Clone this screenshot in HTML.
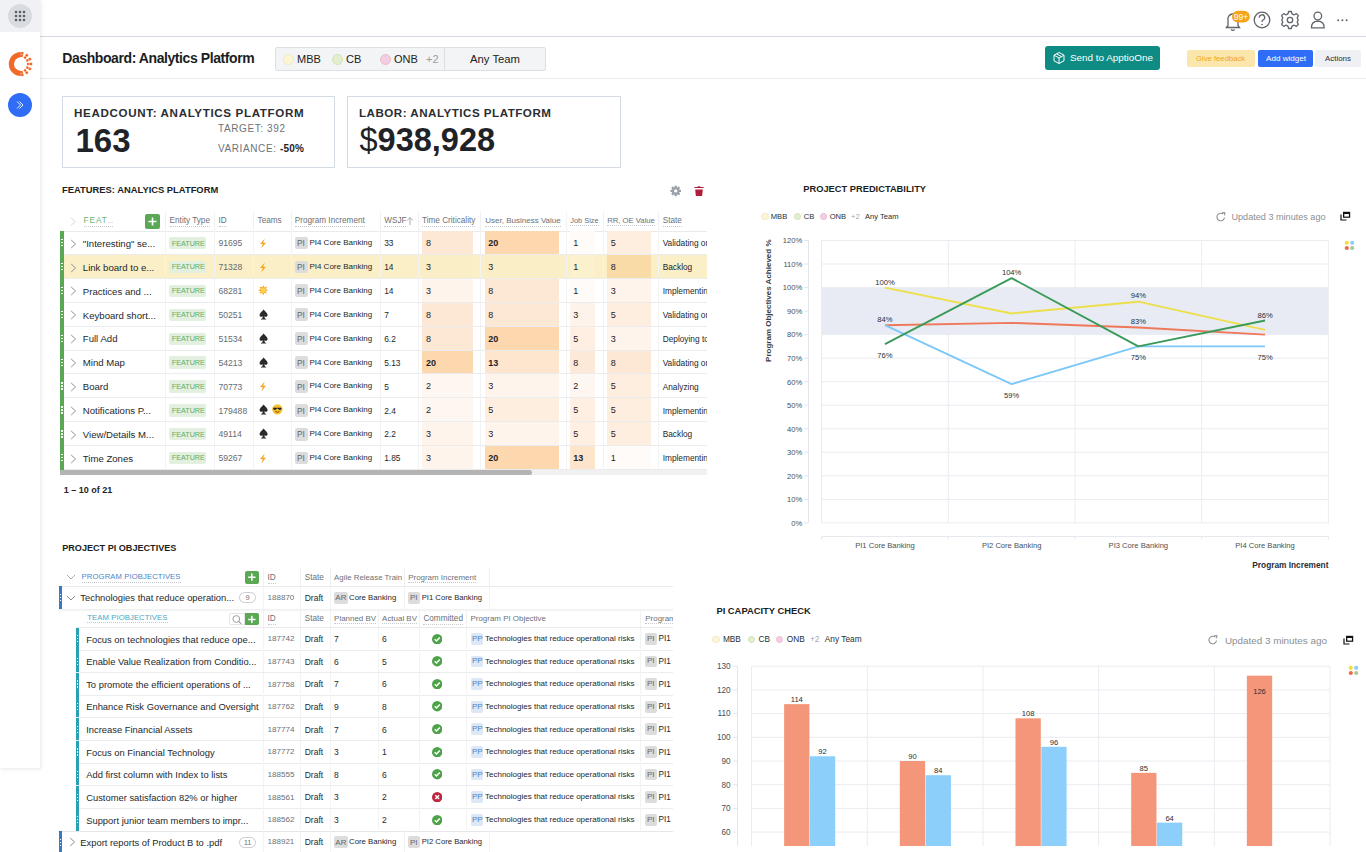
<!DOCTYPE html>
<html><head><meta charset="utf-8"><style>
*{box-sizing:border-box;margin:0;padding:0}
html,body{width:1366px;height:852px;overflow:hidden;background:#fff;font-family:"Liberation Sans",sans-serif;color:#222}
.a{position:absolute}
.t{position:absolute;white-space:nowrap;line-height:1}
</style></head>
<body>
<div class="a" style="left:40px;top:36px;width:1326px;height:1px;background:#d3dae3"></div>
<div class="a" style="left:40px;top:78px;width:1326px;height:1px;background:#e8ebef"></div>
<svg class="a" style="left:1220px;top:5px" width="146" height="30" viewBox="0 0 146 30">
<path d="M6.5 22.5 L8 20.5 L8 15 A5 5 0 0 1 18 13 L18 20.5 L19.5 22.5 Z" stroke="#5f656c" stroke-width="1.3" fill="none"/>
<path d="M11 24.5 Q12.8 26.3 14.6 24.5" stroke="#5f656c" stroke-width="1.3" fill="none"/>
<rect x="12" y="5.8" width="17.8" height="11.8" rx="5.9" fill="#f5a31a"/>
<text x="20.9" y="14.8" font-family="Liberation Sans" font-size="8.5" fill="#fff" text-anchor="middle">99+</text>
<circle cx="42" cy="15" r="7.8" stroke="#5f656c" stroke-width="1.3" fill="none"/>
<path d="M39.3 12.6 A2.7 2.7 0 1 1 43 15 Q42 15.6 42 17" stroke="#5f656c" stroke-width="1.3" fill="none"/>
<circle cx="42" cy="19.6" r="0.8" fill="#5f656c"/>
<circle cx="70" cy="15" r="2.7" stroke="#5f656c" stroke-width="1.3" fill="none"/>
<path d="M68.6 6.5 L71.4 6.5 L72 8.8 L74.2 9.8 L76.4 8.6 L78.4 10.6 L77.2 12.8 L78.2 15 L78.2 15 L77.2 17.2 L78.4 19.4 L76.4 21.4 L74.2 20.2 L72 21.2 L71.4 23.5 L68.6 23.5 L68 21.2 L65.8 20.2 L63.6 21.4 L61.6 19.4 L62.8 17.2 L61.8 15 L62.8 12.8 L61.6 10.6 L63.6 8.6 L65.8 9.8 L68 8.8 Z" stroke="#5f656c" stroke-width="1.3" fill="none" stroke-linejoin="round"/>
<circle cx="97.8" cy="11" r="3.8" stroke="#5f656c" stroke-width="1.3" fill="none"/>
<path d="M91.5 22.8 Q91.2 16.6 97.8 16.2 Q104.4 16.6 104.1 22.8 Z" stroke="#5f656c" stroke-width="1.3" fill="none"/>
<circle cx="118.2" cy="15.3" r="1" fill="#5f656c"/><circle cx="122.4" cy="15.3" r="1" fill="#5f656c"/><circle cx="126.6" cy="15.3" r="1" fill="#5f656c"/>
</svg>
<div class="t" style="left:62.3px;top:50.6px;font-size:14px;font-weight:bold;color:#1b1e21;letter-spacing:-0.42px">Dashboard: Analytics Platform</div>
<div class="a" style="left:275px;top:47px;width:271px;height:24px;background:#f3f4f5;border:1px solid #dde0e3;border-radius:2px"></div>
<div class="a" style="left:444px;top:48px;width:1px;height:22px;background:#dde0e3"></div>
<div class="a" style="left:282.5px;top:53.5px;width:11px;height:11px;border-radius:50%;background:#fcf6d6;border:1px solid #efe9c2"></div>
<div class="a" style="left:331.5px;top:53.5px;width:11px;height:11px;border-radius:50%;background:#e3eecf;border:1px solid #d3e0bd"></div>
<div class="a" style="left:379.5px;top:53.5px;width:11px;height:11px;border-radius:50%;background:#f4cee0;border:1px solid #e8bcd0"></div>
<div class="t" style="left:297px;font-size:11px;color:#222;top:54px">MBB</div>
<div class="t" style="left:346px;font-size:11px;color:#222;top:54px">CB</div>
<div class="t" style="left:394px;font-size:11px;color:#222;top:54px">ONB</div>
<div class="t" style="left:426px;font-size:11px;color:#9a9fa4;top:54px">+2</div>
<div class="t" style="left:470px;font-size:11px;color:#222;top:54px;font-size:11.3px">Any Team</div>
<div class="a" style="left:1045px;top:46px;width:115px;height:24px;background:#0e8c84;border-radius:3px"></div>
<svg class="a" style="left:1052px;top:51px" width="14" height="14" viewBox="0 0 14 14"><path d="M7 1.5 L12 4.2 L12 9.8 L7 12.5 L2 9.8 L2 4.2 Z M2 4.2 L7 7 L12 4.2 M7 7 L7 12.5 M4.5 2.9 L9.5 5.6" stroke="#fff" stroke-width="1" fill="none"/></svg>
<div class="t" style="left:1070px;top:53px;font-size:9.9px;color:#fff">Send to ApptioOne</div>
<div class="a" style="left:1187px;top:50px;width:68px;height:17px;background:#fbe7ac;border-radius:2px"></div>
<div class="t" style="left:1196px;top:54.5px;font-size:7.7px;color:#f3a521">Give feedback</div>
<div class="a" style="left:1258px;top:50px;width:55px;height:17px;background:#2f6df6;border-radius:2px"></div>
<div class="t" style="left:1266px;top:54.5px;font-size:8.1px;color:#fff">Add widget</div>
<div class="a" style="left:1315px;top:50px;width:46px;height:17px;background:#eef0f3;border-radius:2px"></div>
<div class="t" style="left:1325px;top:54.5px;font-size:7.9px;color:#2a2e33">Actions</div>
<div class="a" style="left:62px;top:96px;width:273px;height:72px;border:1px solid #d5dbe3"></div>
<div class="a" style="left:347px;top:96px;width:274px;height:72px;border:1px solid #d5dbe3"></div>
<div class="t" style="left:74px;top:107px;font-size:11.6px;font-weight:bold;letter-spacing:0.65px;color:#2a2e33">HEADCOUNT: ANALYTICS PLATFORM</div>
<div class="t" style="left:75.5px;top:123.5px;font-size:33px;font-weight:bold;color:#1f2327">163</div>
<div class="t" style="left:218px;top:124px;font-size:10px;letter-spacing:0.6px;color:#6d7378">TARGET: 392</div>
<div class="t" style="left:218px;top:143.5px;font-size:10px;letter-spacing:0.6px;color:#6d7378">VARIANCE: <b style="color:#1f2327;letter-spacing:0.2px">-50%</b></div>
<div class="t" style="left:359px;top:107px;font-size:11.6px;font-weight:bold;letter-spacing:0.5px;color:#2a2e33">LABOR: ANALYTICS PLATFORM</div>
<div class="t" style="left:359.5px;top:123.5px;font-size:32.5px;font-weight:bold;color:#1f2327"><span style="font-weight:normal">$</span>938,928</div>
<div class="t" style="left:62px;top:184.5px;font-size:9.4px;font-weight:bold;color:#1b1e21">FEATURES: ANALYICS PLATFORM</div>
<svg class="a" style="left:668px;top:184px" width="15" height="15" viewBox="0 0 15 15">
<rect x="6.6" y="1.6" width="2.2" height="3" transform="rotate(0 7.7 6.9)" fill="#9ba0a6"/><rect x="6.6" y="1.6" width="2.2" height="3" transform="rotate(45 7.7 6.9)" fill="#9ba0a6"/><rect x="6.6" y="1.6" width="2.2" height="3" transform="rotate(90 7.7 6.9)" fill="#9ba0a6"/><rect x="6.6" y="1.6" width="2.2" height="3" transform="rotate(135 7.7 6.9)" fill="#9ba0a6"/><rect x="6.6" y="1.6" width="2.2" height="3" transform="rotate(180 7.7 6.9)" fill="#9ba0a6"/><rect x="6.6" y="1.6" width="2.2" height="3" transform="rotate(225 7.7 6.9)" fill="#9ba0a6"/><rect x="6.6" y="1.6" width="2.2" height="3" transform="rotate(270 7.7 6.9)" fill="#9ba0a6"/><rect x="6.6" y="1.6" width="2.2" height="3" transform="rotate(315 7.7 6.9)" fill="#9ba0a6"/><circle cx="7.7" cy="6.9" r="2.7" stroke="#9ba0a6" stroke-width="2.1" fill="none"/></svg>
<svg class="a" style="left:693px;top:184px" width="12" height="13" viewBox="0 0 12 13">
<path d="M1.4 3.9 L10.6 3.9 L10.6 3.1 L7.5 3.1 L7 2.2 L5 2.2 L4.5 3.1 L1.4 3.1 Z" fill="#b01e3c"/>
<path d="M2.2 5.5 L9.8 5.5 L9.2 11.4 Q9.1 12 8.5 12 L3.5 12 Q2.9 12 2.8 11.4 Z" fill="#b01e3c"/></svg>
<div class="a" style="left:60px;top:211.5px;width:647px;height:258.5px;overflow:hidden">
<div class="a" style="left:0.00px;top:19.50px;width:647.00px;height:1.00px;background:#e9eaeb"></div>
<div class="a" style="left:105.00px;top:0.00px;width:1.00px;height:19.70px;background:#f0f1f2"></div>
<div class="a" style="left:154.00px;top:0.00px;width:1.00px;height:19.70px;background:#f0f1f2"></div>
<div class="a" style="left:193.00px;top:0.00px;width:1.00px;height:19.70px;background:#f0f1f2"></div>
<div class="a" style="left:231.00px;top:0.00px;width:1.00px;height:19.70px;background:#f0f1f2"></div>
<div class="a" style="left:320.00px;top:0.00px;width:1.00px;height:19.70px;background:#f0f1f2"></div>
<div class="a" style="left:358.00px;top:0.00px;width:1.00px;height:19.70px;background:#f0f1f2"></div>
<div class="a" style="left:420.00px;top:0.00px;width:1.00px;height:19.70px;background:#f0f1f2"></div>
<div class="a" style="left:506.00px;top:0.00px;width:1.00px;height:19.70px;background:#f0f1f2"></div>
<div class="a" style="left:543.00px;top:0.00px;width:1.00px;height:19.70px;background:#f0f1f2"></div>
<div class="a" style="left:598.00px;top:0.00px;width:1.00px;height:19.70px;background:#f0f1f2"></div>
<svg class="a" style="left:9.00px;top:4.50px;width:8.00px;height:11.00px;" viewBox="0 0 8 11"><path d="M2 1.5 L6 5.5 L2 9.5" stroke="#d3d5d8" stroke-width="1" fill="none"/></svg>
<div class="t" style="left:23.50px;top:5.00px;font-size:8.2px;color:#6db56b;border-bottom:1px dotted #c6cacf;padding-bottom:1px;letter-spacing:1.0px">FEAT<span style="letter-spacing:0.2px;color:#8a8f94;font-size:6px">...</span></div>
<div class="a" style="left:85.00px;top:2.50px;width:15.00px;height:15.00px;background:#5aa853;border-radius:2px"></div>
<svg class="a" style="left:85.00px;top:2.50px;width:15.00px;height:15.00px;" viewBox="0 0 15 15"><path d="M7.5 3.5 L7.5 11.5 M3.5 7.5 L11.5 7.5" stroke="#fff" stroke-width="1.6"/></svg>
<div class="t" style="left:109.60px;top:5.00px;font-size:8.2px;color:#6c7177;border-bottom:1px dotted #c6cacf;padding-bottom:1px;">Entity Type</div>
<div class="t" style="left:158.50px;top:5.00px;font-size:8.2px;color:#6c7177;border-bottom:1px dotted #c6cacf;padding-bottom:1px;">ID</div>
<div class="t" style="left:197.60px;top:5.00px;font-size:8.2px;color:#6c7177;">Teams</div>
<div class="t" style="left:234.70px;top:5.00px;font-size:8.2px;color:#6c7177;border-bottom:1px dotted #c6cacf;padding-bottom:1px;">Program Increment</div>
<div class="t" style="left:324.20px;top:5.00px;font-size:8.2px;color:#6c7177;border-bottom:1px dotted #c6cacf;padding-bottom:1px;">WSJF</div>
<svg class="a" style="left:346.00px;top:4.50px;width:8.00px;height:10.00px;" viewBox="0 0 8 10"><path d="M4 9 L4 1.5 M1.2 4.3 L4 1.5 L6.8 4.3" stroke="#a8acb0" stroke-width="1" fill="none"/></svg>
<div class="t" style="left:362.00px;top:5.00px;font-size:8.2px;color:#6c7177;border-bottom:1px dotted #c6cacf;padding-bottom:1px;">Time Criticality</div>
<div class="t" style="left:425.30px;top:5.00px;font-size:8.0px;color:#6c7177;border-bottom:1px dotted #c6cacf;padding-bottom:1px;">User, Business Value</div>
<div class="t" style="left:510.30px;top:5.00px;font-size:7.4px;color:#6c7177;border-bottom:1px dotted #c6cacf;padding-bottom:1px;">Job Size</div>
<div class="t" style="left:547.20px;top:5.00px;font-size:7.7px;color:#6c7177;border-bottom:1px dotted #c6cacf;padding-bottom:1px;">RR, OE Value</div>
<div class="t" style="left:602.70px;top:5.00px;font-size:8.2px;color:#6c7177;border-bottom:1px dotted #c6cacf;padding-bottom:1px;">State</div>
<div class="a" style="left:0.00px;top:42.58px;width:647.00px;height:1.00px;background:#ebeced"></div>
<div class="a" style="left:105.00px;top:19.70px;width:1.00px;height:22.88px;background:#f3f3f4"></div>
<div class="a" style="left:154.00px;top:19.70px;width:1.00px;height:22.88px;background:#f3f3f4"></div>
<div class="a" style="left:193.00px;top:19.70px;width:1.00px;height:22.88px;background:#f3f3f4"></div>
<div class="a" style="left:231.00px;top:19.70px;width:1.00px;height:22.88px;background:#f3f3f4"></div>
<div class="a" style="left:320.00px;top:19.70px;width:1.00px;height:22.88px;background:#f3f3f4"></div>
<div class="a" style="left:358.00px;top:19.70px;width:1.00px;height:22.88px;background:#f3f3f4"></div>
<div class="a" style="left:420.00px;top:19.70px;width:1.00px;height:22.88px;background:#f3f3f4"></div>
<div class="a" style="left:506.00px;top:19.70px;width:1.00px;height:22.88px;background:#f3f3f4"></div>
<div class="a" style="left:543.00px;top:19.70px;width:1.00px;height:22.88px;background:#f3f3f4"></div>
<div class="a" style="left:598.00px;top:19.70px;width:1.00px;height:22.88px;background:#f3f3f4"></div>
<div class="a" style="left:362.00px;top:19.70px;width:51.20px;height:22.88px;background:#fde7d5"></div>
<div class="a" style="left:425.30px;top:19.70px;width:73.60px;height:22.88px;background:#fdd8ae"></div>
<div class="a" style="left:509.80px;top:19.70px;width:25.20px;height:22.88px;background:#fffbf8"></div>
<div class="a" style="left:547.20px;top:19.70px;width:43.80px;height:22.88px;background:#feeee0"></div>
<div class="a" style="left:0.00px;top:19.70px;width:4.00px;height:23.88px;background:#5aa853"></div>
<div class="a" style="left:1.30px;top:27.70px;width:1.30px;height:1.30px;background:#fff"></div>
<div class="a" style="left:1.30px;top:30.70px;width:1.30px;height:1.30px;background:#fff"></div>
<div class="a" style="left:1.30px;top:33.70px;width:1.30px;height:1.30px;background:#fff"></div>
<svg class="a" style="left:10.00px;top:27.20px;width:7.00px;height:10.00px;" viewBox="0 0 7 10"><path d="M1.2 1 L5.5 5 L1.2 9" stroke="#8d9196" stroke-width="1" fill="none"/></svg>
<div class="t" style="left:22.80px;top:27.40px;font-size:9.6px;color:#24282c">"Interesting" se...</div>
<div class="a" style="left:109.20px;top:25.50px;width:37.30px;height:12.40px;background:#e3f0df;border-radius:2px"></div>
<div class="t" style="left:111.80px;top:28.00px;font-size:7.2px;color:#62ad5f">FEATURE</div>
<div class="t" style="left:158.50px;top:27.90px;font-size:8.6px;color:#666b70">91695</div>
<svg class="a" style="left:198.50px;top:26.20px;width:8.00px;height:11.00px;" viewBox="0 0 8 11"><path d="M5.8 0.5 L1 6 L3.8 6 L2.2 10.5 L7 4.8 L4.2 4.8 Z" fill="#f5a623"/></svg>
<div class="a" style="left:235.00px;top:25.20px;width:12.50px;height:12.80px;background:#dcdcdc;border-radius:2px"></div>
<div class="t" style="left:237.00px;top:27.90px;font-size:8.3px;color:#666">PI</div>
<div class="t" style="left:249.40px;top:27.70px;font-size:8px;color:#24282c">PI4 Core Banking</div>
<div class="t" style="left:324.20px;top:27.90px;font-size:8.4px;color:#24282c">33</div>
<div class="t" style="left:366.00px;top:27.70px;font-size:9px;color:#1f2327;">8</div>
<div class="t" style="left:428.30px;top:27.70px;font-size:9px;color:#1f2327;font-weight:bold;">20</div>
<div class="t" style="left:513.20px;top:27.70px;font-size:9px;color:#1f2327;">1</div>
<div class="t" style="left:550.80px;top:27.70px;font-size:9px;color:#1f2327;">5</div>
<div class="t" style="left:602.70px;top:27.90px;font-size:8.3px;color:#24282c">Validating on Staging</div>
<div class="a" style="left:0.00px;top:43.58px;width:647.00px;height:23.88px;background:#faefc6"></div>
<div class="a" style="left:0.00px;top:66.46px;width:647.00px;height:1.00px;background:#ebeced"></div>
<div class="a" style="left:105.00px;top:43.58px;width:1.00px;height:22.88px;background:#f3f3f4"></div>
<div class="a" style="left:154.00px;top:43.58px;width:1.00px;height:22.88px;background:#f3f3f4"></div>
<div class="a" style="left:193.00px;top:43.58px;width:1.00px;height:22.88px;background:#f3f3f4"></div>
<div class="a" style="left:231.00px;top:43.58px;width:1.00px;height:22.88px;background:#f3f3f4"></div>
<div class="a" style="left:320.00px;top:43.58px;width:1.00px;height:22.88px;background:#f3f3f4"></div>
<div class="a" style="left:358.00px;top:43.58px;width:1.00px;height:22.88px;background:#f3f3f4"></div>
<div class="a" style="left:420.00px;top:43.58px;width:1.00px;height:22.88px;background:#f3f3f4"></div>
<div class="a" style="left:506.00px;top:43.58px;width:1.00px;height:22.88px;background:#f3f3f4"></div>
<div class="a" style="left:543.00px;top:43.58px;width:1.00px;height:22.88px;background:#f3f3f4"></div>
<div class="a" style="left:598.00px;top:43.58px;width:1.00px;height:22.88px;background:#f3f3f4"></div>
<div class="a" style="left:362.00px;top:43.58px;width:51.20px;height:22.88px;background:#f9eec5"></div>
<div class="a" style="left:425.30px;top:43.58px;width:73.60px;height:22.88px;background:#f9eec5"></div>
<div class="a" style="left:509.80px;top:43.58px;width:25.20px;height:22.88px;background:#fbf1cc"></div>
<div class="a" style="left:547.20px;top:43.58px;width:43.80px;height:22.88px;background:#f8dba6"></div>
<div class="a" style="left:0.00px;top:43.58px;width:4.00px;height:23.88px;background:#5aa853"></div>
<div class="a" style="left:1.30px;top:51.58px;width:1.30px;height:1.30px;background:#fff"></div>
<div class="a" style="left:1.30px;top:54.58px;width:1.30px;height:1.30px;background:#fff"></div>
<div class="a" style="left:1.30px;top:57.58px;width:1.30px;height:1.30px;background:#fff"></div>
<svg class="a" style="left:10.00px;top:51.08px;width:7.00px;height:10.00px;" viewBox="0 0 7 10"><path d="M1.2 1 L5.5 5 L1.2 9" stroke="#8d9196" stroke-width="1" fill="none"/></svg>
<div class="t" style="left:22.80px;top:51.28px;font-size:9.6px;color:#24282c">Link board to e...</div>
<div class="a" style="left:109.20px;top:49.38px;width:37.30px;height:12.40px;background:#e3f0df;border-radius:2px"></div>
<div class="t" style="left:111.80px;top:51.88px;font-size:7.2px;color:#62ad5f">FEATURE</div>
<div class="t" style="left:158.50px;top:51.78px;font-size:8.6px;color:#666b70">71328</div>
<svg class="a" style="left:198.50px;top:50.08px;width:8.00px;height:11.00px;" viewBox="0 0 8 11"><path d="M5.8 0.5 L1 6 L3.8 6 L2.2 10.5 L7 4.8 L4.2 4.8 Z" fill="#f5a623"/></svg>
<div class="a" style="left:235.00px;top:49.08px;width:12.50px;height:12.80px;background:#dcdcdc;border-radius:2px"></div>
<div class="t" style="left:237.00px;top:51.78px;font-size:8.3px;color:#666">PI</div>
<div class="t" style="left:249.40px;top:51.58px;font-size:8px;color:#24282c">PI4 Core Banking</div>
<div class="t" style="left:324.20px;top:51.78px;font-size:8.4px;color:#24282c">14</div>
<div class="t" style="left:366.00px;top:51.58px;font-size:9px;color:#1f2327;">3</div>
<div class="t" style="left:428.30px;top:51.58px;font-size:9px;color:#1f2327;">3</div>
<div class="t" style="left:513.20px;top:51.58px;font-size:9px;color:#1f2327;">1</div>
<div class="t" style="left:550.80px;top:51.58px;font-size:9px;color:#1f2327;">8</div>
<div class="t" style="left:602.70px;top:51.78px;font-size:8.3px;color:#24282c">Backlog</div>
<div class="a" style="left:0.00px;top:90.34px;width:647.00px;height:1.00px;background:#ebeced"></div>
<div class="a" style="left:105.00px;top:67.46px;width:1.00px;height:22.88px;background:#f3f3f4"></div>
<div class="a" style="left:154.00px;top:67.46px;width:1.00px;height:22.88px;background:#f3f3f4"></div>
<div class="a" style="left:193.00px;top:67.46px;width:1.00px;height:22.88px;background:#f3f3f4"></div>
<div class="a" style="left:231.00px;top:67.46px;width:1.00px;height:22.88px;background:#f3f3f4"></div>
<div class="a" style="left:320.00px;top:67.46px;width:1.00px;height:22.88px;background:#f3f3f4"></div>
<div class="a" style="left:358.00px;top:67.46px;width:1.00px;height:22.88px;background:#f3f3f4"></div>
<div class="a" style="left:420.00px;top:67.46px;width:1.00px;height:22.88px;background:#f3f3f4"></div>
<div class="a" style="left:506.00px;top:67.46px;width:1.00px;height:22.88px;background:#f3f3f4"></div>
<div class="a" style="left:543.00px;top:67.46px;width:1.00px;height:22.88px;background:#f3f3f4"></div>
<div class="a" style="left:598.00px;top:67.46px;width:1.00px;height:22.88px;background:#f3f3f4"></div>
<div class="a" style="left:362.00px;top:67.46px;width:51.20px;height:22.88px;background:#fef4ec"></div>
<div class="a" style="left:425.30px;top:67.46px;width:73.60px;height:22.88px;background:#fde7d5"></div>
<div class="a" style="left:509.80px;top:67.46px;width:25.20px;height:22.88px;background:#fffbf8"></div>
<div class="a" style="left:547.20px;top:67.46px;width:43.80px;height:22.88px;background:#fef4ec"></div>
<div class="a" style="left:0.00px;top:67.46px;width:4.00px;height:23.88px;background:#5aa853"></div>
<div class="a" style="left:1.30px;top:75.46px;width:1.30px;height:1.30px;background:#fff"></div>
<div class="a" style="left:1.30px;top:78.46px;width:1.30px;height:1.30px;background:#fff"></div>
<div class="a" style="left:1.30px;top:81.46px;width:1.30px;height:1.30px;background:#fff"></div>
<svg class="a" style="left:10.00px;top:74.96px;width:7.00px;height:10.00px;" viewBox="0 0 7 10"><path d="M1.2 1 L5.5 5 L1.2 9" stroke="#8d9196" stroke-width="1" fill="none"/></svg>
<div class="t" style="left:22.80px;top:75.16px;font-size:9.6px;color:#24282c">Practices and ...</div>
<div class="a" style="left:109.20px;top:73.26px;width:37.30px;height:12.40px;background:#e3f0df;border-radius:2px"></div>
<div class="t" style="left:111.80px;top:75.76px;font-size:7.2px;color:#62ad5f">FEATURE</div>
<div class="t" style="left:158.50px;top:75.66px;font-size:8.6px;color:#666b70">68281</div>
<svg class="a" style="left:198.00px;top:73.76px;width:10.40px;height:10.40px;" viewBox="0 0 10 10"><path d="M5 0 L6 2.5 L8.5 1.5 L7.5 4 L10 5 L7.5 6 L8.5 8.5 L6 7.5 L5 10 L4 7.5 L1.5 8.5 L2.5 6 L0 5 L2.5 4 L1.5 1.5 L4 2.5 Z" fill="#f6a21e"/><circle cx="5" cy="5" r="2.6" fill="#fbd34a"/></svg>
<div class="a" style="left:235.00px;top:72.96px;width:12.50px;height:12.80px;background:#dcdcdc;border-radius:2px"></div>
<div class="t" style="left:237.00px;top:75.66px;font-size:8.3px;color:#666">PI</div>
<div class="t" style="left:249.40px;top:75.46px;font-size:8px;color:#24282c">PI4 Core Banking</div>
<div class="t" style="left:324.20px;top:75.66px;font-size:8.4px;color:#24282c">14</div>
<div class="t" style="left:366.00px;top:75.46px;font-size:9px;color:#1f2327;">3</div>
<div class="t" style="left:428.30px;top:75.46px;font-size:9px;color:#1f2327;">8</div>
<div class="t" style="left:513.20px;top:75.46px;font-size:9px;color:#1f2327;">1</div>
<div class="t" style="left:550.80px;top:75.46px;font-size:9px;color:#1f2327;">3</div>
<div class="t" style="left:602.70px;top:75.66px;font-size:8.3px;color:#24282c">Implementing</div>
<div class="a" style="left:0.00px;top:114.22px;width:647.00px;height:1.00px;background:#ebeced"></div>
<div class="a" style="left:105.00px;top:91.34px;width:1.00px;height:22.88px;background:#f3f3f4"></div>
<div class="a" style="left:154.00px;top:91.34px;width:1.00px;height:22.88px;background:#f3f3f4"></div>
<div class="a" style="left:193.00px;top:91.34px;width:1.00px;height:22.88px;background:#f3f3f4"></div>
<div class="a" style="left:231.00px;top:91.34px;width:1.00px;height:22.88px;background:#f3f3f4"></div>
<div class="a" style="left:320.00px;top:91.34px;width:1.00px;height:22.88px;background:#f3f3f4"></div>
<div class="a" style="left:358.00px;top:91.34px;width:1.00px;height:22.88px;background:#f3f3f4"></div>
<div class="a" style="left:420.00px;top:91.34px;width:1.00px;height:22.88px;background:#f3f3f4"></div>
<div class="a" style="left:506.00px;top:91.34px;width:1.00px;height:22.88px;background:#f3f3f4"></div>
<div class="a" style="left:543.00px;top:91.34px;width:1.00px;height:22.88px;background:#f3f3f4"></div>
<div class="a" style="left:598.00px;top:91.34px;width:1.00px;height:22.88px;background:#f3f3f4"></div>
<div class="a" style="left:362.00px;top:91.34px;width:51.20px;height:22.88px;background:#fde7d5"></div>
<div class="a" style="left:425.30px;top:91.34px;width:73.60px;height:22.88px;background:#fde7d5"></div>
<div class="a" style="left:509.80px;top:91.34px;width:25.20px;height:22.88px;background:#fef3ea"></div>
<div class="a" style="left:547.20px;top:91.34px;width:43.80px;height:22.88px;background:#feeee0"></div>
<div class="a" style="left:0.00px;top:91.34px;width:4.00px;height:23.88px;background:#5aa853"></div>
<div class="a" style="left:1.30px;top:99.34px;width:1.30px;height:1.30px;background:#fff"></div>
<div class="a" style="left:1.30px;top:102.34px;width:1.30px;height:1.30px;background:#fff"></div>
<div class="a" style="left:1.30px;top:105.34px;width:1.30px;height:1.30px;background:#fff"></div>
<svg class="a" style="left:10.00px;top:98.84px;width:7.00px;height:10.00px;" viewBox="0 0 7 10"><path d="M1.2 1 L5.5 5 L1.2 9" stroke="#8d9196" stroke-width="1" fill="none"/></svg>
<div class="t" style="left:22.80px;top:99.04px;font-size:9.6px;color:#24282c">Keyboard short...</div>
<div class="a" style="left:109.20px;top:97.14px;width:37.30px;height:12.40px;background:#e3f0df;border-radius:2px"></div>
<div class="t" style="left:111.80px;top:99.64px;font-size:7.2px;color:#62ad5f">FEATURE</div>
<div class="t" style="left:158.50px;top:99.54px;font-size:8.6px;color:#666b70">50251</div>
<svg class="a" style="left:198.70px;top:97.34px;width:9.20px;height:11.20px;" viewBox="0 0 9 11"><path d="M4.5 0.5 C3 2.5 0.5 4 0.5 6 C0.5 7.6 2.3 8.3 3.8 7.2 L3.2 9.4 L2 9.6 L2 10.3 L7 10.3 L7 9.6 L5.8 9.4 L5.2 7.2 C6.7 8.3 8.5 7.6 8.5 6 C8.5 4 6 2.5 4.5 0.5 Z" fill="#2b2b2b"/></svg>
<div class="a" style="left:235.00px;top:96.84px;width:12.50px;height:12.80px;background:#dcdcdc;border-radius:2px"></div>
<div class="t" style="left:237.00px;top:99.54px;font-size:8.3px;color:#666">PI</div>
<div class="t" style="left:249.40px;top:99.34px;font-size:8px;color:#24282c">PI4 Core Banking</div>
<div class="t" style="left:324.20px;top:99.54px;font-size:8.4px;color:#24282c">7</div>
<div class="t" style="left:366.00px;top:99.34px;font-size:9px;color:#1f2327;">8</div>
<div class="t" style="left:428.30px;top:99.34px;font-size:9px;color:#1f2327;">8</div>
<div class="t" style="left:513.20px;top:99.34px;font-size:9px;color:#1f2327;">3</div>
<div class="t" style="left:550.80px;top:99.34px;font-size:9px;color:#1f2327;">5</div>
<div class="t" style="left:602.70px;top:99.54px;font-size:8.3px;color:#24282c">Validating on Staging</div>
<div class="a" style="left:0.00px;top:138.10px;width:647.00px;height:1.00px;background:#ebeced"></div>
<div class="a" style="left:105.00px;top:115.22px;width:1.00px;height:22.88px;background:#f3f3f4"></div>
<div class="a" style="left:154.00px;top:115.22px;width:1.00px;height:22.88px;background:#f3f3f4"></div>
<div class="a" style="left:193.00px;top:115.22px;width:1.00px;height:22.88px;background:#f3f3f4"></div>
<div class="a" style="left:231.00px;top:115.22px;width:1.00px;height:22.88px;background:#f3f3f4"></div>
<div class="a" style="left:320.00px;top:115.22px;width:1.00px;height:22.88px;background:#f3f3f4"></div>
<div class="a" style="left:358.00px;top:115.22px;width:1.00px;height:22.88px;background:#f3f3f4"></div>
<div class="a" style="left:420.00px;top:115.22px;width:1.00px;height:22.88px;background:#f3f3f4"></div>
<div class="a" style="left:506.00px;top:115.22px;width:1.00px;height:22.88px;background:#f3f3f4"></div>
<div class="a" style="left:543.00px;top:115.22px;width:1.00px;height:22.88px;background:#f3f3f4"></div>
<div class="a" style="left:598.00px;top:115.22px;width:1.00px;height:22.88px;background:#f3f3f4"></div>
<div class="a" style="left:362.00px;top:115.22px;width:51.20px;height:22.88px;background:#fde7d5"></div>
<div class="a" style="left:425.30px;top:115.22px;width:73.60px;height:22.88px;background:#fdd8ae"></div>
<div class="a" style="left:509.80px;top:115.22px;width:25.20px;height:22.88px;background:#feefe2"></div>
<div class="a" style="left:547.20px;top:115.22px;width:43.80px;height:22.88px;background:#fef4ec"></div>
<div class="a" style="left:0.00px;top:115.22px;width:4.00px;height:23.88px;background:#5aa853"></div>
<div class="a" style="left:1.30px;top:123.22px;width:1.30px;height:1.30px;background:#fff"></div>
<div class="a" style="left:1.30px;top:126.22px;width:1.30px;height:1.30px;background:#fff"></div>
<div class="a" style="left:1.30px;top:129.22px;width:1.30px;height:1.30px;background:#fff"></div>
<svg class="a" style="left:10.00px;top:122.72px;width:7.00px;height:10.00px;" viewBox="0 0 7 10"><path d="M1.2 1 L5.5 5 L1.2 9" stroke="#8d9196" stroke-width="1" fill="none"/></svg>
<div class="t" style="left:22.80px;top:122.92px;font-size:9.6px;color:#24282c">Full Add</div>
<div class="a" style="left:109.20px;top:121.02px;width:37.30px;height:12.40px;background:#e3f0df;border-radius:2px"></div>
<div class="t" style="left:111.80px;top:123.52px;font-size:7.2px;color:#62ad5f">FEATURE</div>
<div class="t" style="left:158.50px;top:123.42px;font-size:8.6px;color:#666b70">51534</div>
<svg class="a" style="left:198.70px;top:121.22px;width:9.20px;height:11.20px;" viewBox="0 0 9 11"><path d="M4.5 0.5 C3 2.5 0.5 4 0.5 6 C0.5 7.6 2.3 8.3 3.8 7.2 L3.2 9.4 L2 9.6 L2 10.3 L7 10.3 L7 9.6 L5.8 9.4 L5.2 7.2 C6.7 8.3 8.5 7.6 8.5 6 C8.5 4 6 2.5 4.5 0.5 Z" fill="#2b2b2b"/></svg>
<div class="a" style="left:235.00px;top:120.72px;width:12.50px;height:12.80px;background:#dcdcdc;border-radius:2px"></div>
<div class="t" style="left:237.00px;top:123.42px;font-size:8.3px;color:#666">PI</div>
<div class="t" style="left:249.40px;top:123.22px;font-size:8px;color:#24282c">PI4 Core Banking</div>
<div class="t" style="left:324.20px;top:123.42px;font-size:8.4px;color:#24282c">6.2</div>
<div class="t" style="left:366.00px;top:123.22px;font-size:9px;color:#1f2327;">8</div>
<div class="t" style="left:428.30px;top:123.22px;font-size:9px;color:#1f2327;font-weight:bold;">20</div>
<div class="t" style="left:513.20px;top:123.22px;font-size:9px;color:#1f2327;">5</div>
<div class="t" style="left:550.80px;top:123.22px;font-size:9px;color:#1f2327;">3</div>
<div class="t" style="left:602.70px;top:123.42px;font-size:8.3px;color:#24282c">Deploying to Prod</div>
<div class="a" style="left:0.00px;top:161.98px;width:647.00px;height:1.00px;background:#ebeced"></div>
<div class="a" style="left:105.00px;top:139.10px;width:1.00px;height:22.88px;background:#f3f3f4"></div>
<div class="a" style="left:154.00px;top:139.10px;width:1.00px;height:22.88px;background:#f3f3f4"></div>
<div class="a" style="left:193.00px;top:139.10px;width:1.00px;height:22.88px;background:#f3f3f4"></div>
<div class="a" style="left:231.00px;top:139.10px;width:1.00px;height:22.88px;background:#f3f3f4"></div>
<div class="a" style="left:320.00px;top:139.10px;width:1.00px;height:22.88px;background:#f3f3f4"></div>
<div class="a" style="left:358.00px;top:139.10px;width:1.00px;height:22.88px;background:#f3f3f4"></div>
<div class="a" style="left:420.00px;top:139.10px;width:1.00px;height:22.88px;background:#f3f3f4"></div>
<div class="a" style="left:506.00px;top:139.10px;width:1.00px;height:22.88px;background:#f3f3f4"></div>
<div class="a" style="left:543.00px;top:139.10px;width:1.00px;height:22.88px;background:#f3f3f4"></div>
<div class="a" style="left:598.00px;top:139.10px;width:1.00px;height:22.88px;background:#f3f3f4"></div>
<div class="a" style="left:362.00px;top:139.10px;width:51.20px;height:22.88px;background:#fdd8ae"></div>
<div class="a" style="left:425.30px;top:139.10px;width:73.60px;height:22.88px;background:#fde6cd"></div>
<div class="a" style="left:509.80px;top:139.10px;width:25.20px;height:22.88px;background:#fde9d8"></div>
<div class="a" style="left:547.20px;top:139.10px;width:43.80px;height:22.88px;background:#fde7d5"></div>
<div class="a" style="left:0.00px;top:139.10px;width:4.00px;height:23.88px;background:#5aa853"></div>
<div class="a" style="left:1.30px;top:147.10px;width:1.30px;height:1.30px;background:#fff"></div>
<div class="a" style="left:1.30px;top:150.10px;width:1.30px;height:1.30px;background:#fff"></div>
<div class="a" style="left:1.30px;top:153.10px;width:1.30px;height:1.30px;background:#fff"></div>
<svg class="a" style="left:10.00px;top:146.60px;width:7.00px;height:10.00px;" viewBox="0 0 7 10"><path d="M1.2 1 L5.5 5 L1.2 9" stroke="#8d9196" stroke-width="1" fill="none"/></svg>
<div class="t" style="left:22.80px;top:146.80px;font-size:9.6px;color:#24282c">Mind Map</div>
<div class="a" style="left:109.20px;top:144.90px;width:37.30px;height:12.40px;background:#e3f0df;border-radius:2px"></div>
<div class="t" style="left:111.80px;top:147.40px;font-size:7.2px;color:#62ad5f">FEATURE</div>
<div class="t" style="left:158.50px;top:147.30px;font-size:8.6px;color:#666b70">54213</div>
<svg class="a" style="left:198.70px;top:145.10px;width:9.20px;height:11.20px;" viewBox="0 0 9 11"><path d="M4.5 0.5 C3 2.5 0.5 4 0.5 6 C0.5 7.6 2.3 8.3 3.8 7.2 L3.2 9.4 L2 9.6 L2 10.3 L7 10.3 L7 9.6 L5.8 9.4 L5.2 7.2 C6.7 8.3 8.5 7.6 8.5 6 C8.5 4 6 2.5 4.5 0.5 Z" fill="#2b2b2b"/></svg>
<div class="a" style="left:235.00px;top:144.60px;width:12.50px;height:12.80px;background:#dcdcdc;border-radius:2px"></div>
<div class="t" style="left:237.00px;top:147.30px;font-size:8.3px;color:#666">PI</div>
<div class="t" style="left:249.40px;top:147.10px;font-size:8px;color:#24282c">PI4 Core Banking</div>
<div class="t" style="left:324.20px;top:147.30px;font-size:8.4px;color:#24282c">5.13</div>
<div class="t" style="left:366.00px;top:147.10px;font-size:9px;color:#1f2327;font-weight:bold;">20</div>
<div class="t" style="left:428.30px;top:147.10px;font-size:9px;color:#1f2327;font-weight:bold;">13</div>
<div class="t" style="left:513.20px;top:147.10px;font-size:9px;color:#1f2327;">8</div>
<div class="t" style="left:550.80px;top:147.10px;font-size:9px;color:#1f2327;">8</div>
<div class="t" style="left:602.70px;top:147.30px;font-size:8.3px;color:#24282c">Validating on Staging</div>
<div class="a" style="left:0.00px;top:185.86px;width:647.00px;height:1.00px;background:#ebeced"></div>
<div class="a" style="left:105.00px;top:162.98px;width:1.00px;height:22.88px;background:#f3f3f4"></div>
<div class="a" style="left:154.00px;top:162.98px;width:1.00px;height:22.88px;background:#f3f3f4"></div>
<div class="a" style="left:193.00px;top:162.98px;width:1.00px;height:22.88px;background:#f3f3f4"></div>
<div class="a" style="left:231.00px;top:162.98px;width:1.00px;height:22.88px;background:#f3f3f4"></div>
<div class="a" style="left:320.00px;top:162.98px;width:1.00px;height:22.88px;background:#f3f3f4"></div>
<div class="a" style="left:358.00px;top:162.98px;width:1.00px;height:22.88px;background:#f3f3f4"></div>
<div class="a" style="left:420.00px;top:162.98px;width:1.00px;height:22.88px;background:#f3f3f4"></div>
<div class="a" style="left:506.00px;top:162.98px;width:1.00px;height:22.88px;background:#f3f3f4"></div>
<div class="a" style="left:543.00px;top:162.98px;width:1.00px;height:22.88px;background:#f3f3f4"></div>
<div class="a" style="left:598.00px;top:162.98px;width:1.00px;height:22.88px;background:#f3f3f4"></div>
<div class="a" style="left:362.00px;top:162.98px;width:51.20px;height:22.88px;background:#fef7f1"></div>
<div class="a" style="left:425.30px;top:162.98px;width:73.60px;height:22.88px;background:#fef4ec"></div>
<div class="a" style="left:509.80px;top:162.98px;width:25.20px;height:22.88px;background:#fef7f1"></div>
<div class="a" style="left:547.20px;top:162.98px;width:43.80px;height:22.88px;background:#feeee0"></div>
<div class="a" style="left:0.00px;top:162.98px;width:4.00px;height:23.88px;background:#5aa853"></div>
<div class="a" style="left:1.30px;top:170.98px;width:1.30px;height:1.30px;background:#fff"></div>
<div class="a" style="left:1.30px;top:173.98px;width:1.30px;height:1.30px;background:#fff"></div>
<div class="a" style="left:1.30px;top:176.98px;width:1.30px;height:1.30px;background:#fff"></div>
<svg class="a" style="left:10.00px;top:170.48px;width:7.00px;height:10.00px;" viewBox="0 0 7 10"><path d="M1.2 1 L5.5 5 L1.2 9" stroke="#8d9196" stroke-width="1" fill="none"/></svg>
<div class="t" style="left:22.80px;top:170.68px;font-size:9.6px;color:#24282c">Board</div>
<div class="a" style="left:109.20px;top:168.78px;width:37.30px;height:12.40px;background:#e3f0df;border-radius:2px"></div>
<div class="t" style="left:111.80px;top:171.28px;font-size:7.2px;color:#62ad5f">FEATURE</div>
<div class="t" style="left:158.50px;top:171.18px;font-size:8.6px;color:#666b70">70773</div>
<svg class="a" style="left:198.50px;top:169.48px;width:8.00px;height:11.00px;" viewBox="0 0 8 11"><path d="M5.8 0.5 L1 6 L3.8 6 L2.2 10.5 L7 4.8 L4.2 4.8 Z" fill="#f5a623"/></svg>
<div class="a" style="left:235.00px;top:168.48px;width:12.50px;height:12.80px;background:#dcdcdc;border-radius:2px"></div>
<div class="t" style="left:237.00px;top:171.18px;font-size:8.3px;color:#666">PI</div>
<div class="t" style="left:249.40px;top:170.98px;font-size:8px;color:#24282c">PI4 Core Banking</div>
<div class="t" style="left:324.20px;top:171.18px;font-size:8.4px;color:#24282c">5</div>
<div class="t" style="left:366.00px;top:170.98px;font-size:9px;color:#1f2327;">2</div>
<div class="t" style="left:428.30px;top:170.98px;font-size:9px;color:#1f2327;">3</div>
<div class="t" style="left:513.20px;top:170.98px;font-size:9px;color:#1f2327;">2</div>
<div class="t" style="left:550.80px;top:170.98px;font-size:9px;color:#1f2327;">5</div>
<div class="t" style="left:602.70px;top:171.18px;font-size:8.3px;color:#24282c">Analyzing</div>
<div class="a" style="left:0.00px;top:209.74px;width:647.00px;height:1.00px;background:#ebeced"></div>
<div class="a" style="left:105.00px;top:186.86px;width:1.00px;height:22.88px;background:#f3f3f4"></div>
<div class="a" style="left:154.00px;top:186.86px;width:1.00px;height:22.88px;background:#f3f3f4"></div>
<div class="a" style="left:193.00px;top:186.86px;width:1.00px;height:22.88px;background:#f3f3f4"></div>
<div class="a" style="left:231.00px;top:186.86px;width:1.00px;height:22.88px;background:#f3f3f4"></div>
<div class="a" style="left:320.00px;top:186.86px;width:1.00px;height:22.88px;background:#f3f3f4"></div>
<div class="a" style="left:358.00px;top:186.86px;width:1.00px;height:22.88px;background:#f3f3f4"></div>
<div class="a" style="left:420.00px;top:186.86px;width:1.00px;height:22.88px;background:#f3f3f4"></div>
<div class="a" style="left:506.00px;top:186.86px;width:1.00px;height:22.88px;background:#f3f3f4"></div>
<div class="a" style="left:543.00px;top:186.86px;width:1.00px;height:22.88px;background:#f3f3f4"></div>
<div class="a" style="left:598.00px;top:186.86px;width:1.00px;height:22.88px;background:#f3f3f4"></div>
<div class="a" style="left:362.00px;top:186.86px;width:51.20px;height:22.88px;background:#fef7f1"></div>
<div class="a" style="left:425.30px;top:186.86px;width:73.60px;height:22.88px;background:#feeee0"></div>
<div class="a" style="left:509.80px;top:186.86px;width:25.20px;height:22.88px;background:#feefe2"></div>
<div class="a" style="left:547.20px;top:186.86px;width:43.80px;height:22.88px;background:#feeee0"></div>
<div class="a" style="left:0.00px;top:186.86px;width:4.00px;height:23.88px;background:#5aa853"></div>
<div class="a" style="left:1.30px;top:194.86px;width:1.30px;height:1.30px;background:#fff"></div>
<div class="a" style="left:1.30px;top:197.86px;width:1.30px;height:1.30px;background:#fff"></div>
<div class="a" style="left:1.30px;top:200.86px;width:1.30px;height:1.30px;background:#fff"></div>
<svg class="a" style="left:10.00px;top:194.36px;width:7.00px;height:10.00px;" viewBox="0 0 7 10"><path d="M1.2 1 L5.5 5 L1.2 9" stroke="#8d9196" stroke-width="1" fill="none"/></svg>
<div class="t" style="left:22.80px;top:194.56px;font-size:9.6px;color:#24282c">Notifications P...</div>
<div class="a" style="left:109.20px;top:192.66px;width:37.30px;height:12.40px;background:#e3f0df;border-radius:2px"></div>
<div class="t" style="left:111.80px;top:195.16px;font-size:7.2px;color:#62ad5f">FEATURE</div>
<div class="t" style="left:158.50px;top:195.06px;font-size:8.6px;color:#666b70">179488</div>
<svg class="a" style="left:198.70px;top:192.86px;width:9.20px;height:11.20px;" viewBox="0 0 9 11"><path d="M4.5 0.5 C3 2.5 0.5 4 0.5 6 C0.5 7.6 2.3 8.3 3.8 7.2 L3.2 9.4 L2 9.6 L2 10.3 L7 10.3 L7 9.6 L5.8 9.4 L5.2 7.2 C6.7 8.3 8.5 7.6 8.5 6 C8.5 4 6 2.5 4.5 0.5 Z" fill="#2b2b2b"/></svg>
<svg class="a" style="left:212.20px;top:192.86px;width:10.70px;height:10.70px;" viewBox="0 0 10 10"><circle cx="5" cy="5" r="4.8" fill="#f7c02d"/><path d="M1 3.5 L9 3.5 L8.6 5.2 Q7.4 6 6 5 L5.4 4.3 L4.6 4.3 L4 5 Q2.6 6 1.4 5.2 Z" fill="#222"/><path d="M3 7 Q5 8.4 7 7" stroke="#6b3a10" stroke-width="0.8" fill="none"/></svg>
<div class="a" style="left:235.00px;top:192.36px;width:12.50px;height:12.80px;background:#dcdcdc;border-radius:2px"></div>
<div class="t" style="left:237.00px;top:195.06px;font-size:8.3px;color:#666">PI</div>
<div class="t" style="left:249.40px;top:194.86px;font-size:8px;color:#24282c">PI4 Core Banking</div>
<div class="t" style="left:324.20px;top:195.06px;font-size:8.4px;color:#24282c">2.4</div>
<div class="t" style="left:366.00px;top:194.86px;font-size:9px;color:#1f2327;">2</div>
<div class="t" style="left:428.30px;top:194.86px;font-size:9px;color:#1f2327;">5</div>
<div class="t" style="left:513.20px;top:194.86px;font-size:9px;color:#1f2327;">5</div>
<div class="t" style="left:550.80px;top:194.86px;font-size:9px;color:#1f2327;">5</div>
<div class="t" style="left:602.70px;top:195.06px;font-size:8.3px;color:#24282c">Implementing</div>
<div class="a" style="left:0.00px;top:233.62px;width:647.00px;height:1.00px;background:#ebeced"></div>
<div class="a" style="left:105.00px;top:210.74px;width:1.00px;height:22.88px;background:#f3f3f4"></div>
<div class="a" style="left:154.00px;top:210.74px;width:1.00px;height:22.88px;background:#f3f3f4"></div>
<div class="a" style="left:193.00px;top:210.74px;width:1.00px;height:22.88px;background:#f3f3f4"></div>
<div class="a" style="left:231.00px;top:210.74px;width:1.00px;height:22.88px;background:#f3f3f4"></div>
<div class="a" style="left:320.00px;top:210.74px;width:1.00px;height:22.88px;background:#f3f3f4"></div>
<div class="a" style="left:358.00px;top:210.74px;width:1.00px;height:22.88px;background:#f3f3f4"></div>
<div class="a" style="left:420.00px;top:210.74px;width:1.00px;height:22.88px;background:#f3f3f4"></div>
<div class="a" style="left:506.00px;top:210.74px;width:1.00px;height:22.88px;background:#f3f3f4"></div>
<div class="a" style="left:543.00px;top:210.74px;width:1.00px;height:22.88px;background:#f3f3f4"></div>
<div class="a" style="left:598.00px;top:210.74px;width:1.00px;height:22.88px;background:#f3f3f4"></div>
<div class="a" style="left:362.00px;top:210.74px;width:51.20px;height:22.88px;background:#fef4ec"></div>
<div class="a" style="left:425.30px;top:210.74px;width:73.60px;height:22.88px;background:#fef4ec"></div>
<div class="a" style="left:509.80px;top:210.74px;width:25.20px;height:22.88px;background:#feefe2"></div>
<div class="a" style="left:547.20px;top:210.74px;width:43.80px;height:22.88px;background:#feeee0"></div>
<div class="a" style="left:0.00px;top:210.74px;width:4.00px;height:23.88px;background:#5aa853"></div>
<div class="a" style="left:1.30px;top:218.74px;width:1.30px;height:1.30px;background:#fff"></div>
<div class="a" style="left:1.30px;top:221.74px;width:1.30px;height:1.30px;background:#fff"></div>
<div class="a" style="left:1.30px;top:224.74px;width:1.30px;height:1.30px;background:#fff"></div>
<svg class="a" style="left:10.00px;top:218.24px;width:7.00px;height:10.00px;" viewBox="0 0 7 10"><path d="M1.2 1 L5.5 5 L1.2 9" stroke="#8d9196" stroke-width="1" fill="none"/></svg>
<div class="t" style="left:22.80px;top:218.44px;font-size:9.6px;color:#24282c">View/Details M...</div>
<div class="a" style="left:109.20px;top:216.54px;width:37.30px;height:12.40px;background:#e3f0df;border-radius:2px"></div>
<div class="t" style="left:111.80px;top:219.04px;font-size:7.2px;color:#62ad5f">FEATURE</div>
<div class="t" style="left:158.50px;top:218.94px;font-size:8.6px;color:#666b70">49114</div>
<svg class="a" style="left:198.70px;top:216.74px;width:9.20px;height:11.20px;" viewBox="0 0 9 11"><path d="M4.5 0.5 C3 2.5 0.5 4 0.5 6 C0.5 7.6 2.3 8.3 3.8 7.2 L3.2 9.4 L2 9.6 L2 10.3 L7 10.3 L7 9.6 L5.8 9.4 L5.2 7.2 C6.7 8.3 8.5 7.6 8.5 6 C8.5 4 6 2.5 4.5 0.5 Z" fill="#2b2b2b"/></svg>
<div class="a" style="left:235.00px;top:216.24px;width:12.50px;height:12.80px;background:#dcdcdc;border-radius:2px"></div>
<div class="t" style="left:237.00px;top:218.94px;font-size:8.3px;color:#666">PI</div>
<div class="t" style="left:249.40px;top:218.74px;font-size:8px;color:#24282c">PI4 Core Banking</div>
<div class="t" style="left:324.20px;top:218.94px;font-size:8.4px;color:#24282c">2.2</div>
<div class="t" style="left:366.00px;top:218.74px;font-size:9px;color:#1f2327;">3</div>
<div class="t" style="left:428.30px;top:218.74px;font-size:9px;color:#1f2327;">3</div>
<div class="t" style="left:513.20px;top:218.74px;font-size:9px;color:#1f2327;">5</div>
<div class="t" style="left:550.80px;top:218.74px;font-size:9px;color:#1f2327;">5</div>
<div class="t" style="left:602.70px;top:218.94px;font-size:8.3px;color:#24282c">Backlog</div>
<div class="a" style="left:0.00px;top:257.50px;width:647.00px;height:1.00px;background:#ebeced"></div>
<div class="a" style="left:105.00px;top:234.62px;width:1.00px;height:22.88px;background:#f3f3f4"></div>
<div class="a" style="left:154.00px;top:234.62px;width:1.00px;height:22.88px;background:#f3f3f4"></div>
<div class="a" style="left:193.00px;top:234.62px;width:1.00px;height:22.88px;background:#f3f3f4"></div>
<div class="a" style="left:231.00px;top:234.62px;width:1.00px;height:22.88px;background:#f3f3f4"></div>
<div class="a" style="left:320.00px;top:234.62px;width:1.00px;height:22.88px;background:#f3f3f4"></div>
<div class="a" style="left:358.00px;top:234.62px;width:1.00px;height:22.88px;background:#f3f3f4"></div>
<div class="a" style="left:420.00px;top:234.62px;width:1.00px;height:22.88px;background:#f3f3f4"></div>
<div class="a" style="left:506.00px;top:234.62px;width:1.00px;height:22.88px;background:#f3f3f4"></div>
<div class="a" style="left:543.00px;top:234.62px;width:1.00px;height:22.88px;background:#f3f3f4"></div>
<div class="a" style="left:598.00px;top:234.62px;width:1.00px;height:22.88px;background:#f3f3f4"></div>
<div class="a" style="left:362.00px;top:234.62px;width:51.20px;height:22.88px;background:#fef4ec"></div>
<div class="a" style="left:425.30px;top:234.62px;width:73.60px;height:22.88px;background:#fdd8ae"></div>
<div class="a" style="left:509.80px;top:234.62px;width:25.20px;height:22.88px;background:#fde4cb"></div>
<div class="a" style="left:547.20px;top:234.62px;width:43.80px;height:22.88px;background:#fffbf8"></div>
<div class="a" style="left:0.00px;top:234.62px;width:4.00px;height:23.88px;background:#5aa853"></div>
<div class="a" style="left:1.30px;top:242.62px;width:1.30px;height:1.30px;background:#fff"></div>
<div class="a" style="left:1.30px;top:245.62px;width:1.30px;height:1.30px;background:#fff"></div>
<div class="a" style="left:1.30px;top:248.62px;width:1.30px;height:1.30px;background:#fff"></div>
<svg class="a" style="left:10.00px;top:242.12px;width:7.00px;height:10.00px;" viewBox="0 0 7 10"><path d="M1.2 1 L5.5 5 L1.2 9" stroke="#8d9196" stroke-width="1" fill="none"/></svg>
<div class="t" style="left:22.80px;top:242.32px;font-size:9.6px;color:#24282c">Time Zones</div>
<div class="a" style="left:109.20px;top:240.42px;width:37.30px;height:12.40px;background:#e3f0df;border-radius:2px"></div>
<div class="t" style="left:111.80px;top:242.92px;font-size:7.2px;color:#62ad5f">FEATURE</div>
<div class="t" style="left:158.50px;top:242.82px;font-size:8.6px;color:#666b70">59267</div>
<svg class="a" style="left:198.50px;top:241.12px;width:8.00px;height:11.00px;" viewBox="0 0 8 11"><path d="M5.8 0.5 L1 6 L3.8 6 L2.2 10.5 L7 4.8 L4.2 4.8 Z" fill="#f5a623"/></svg>
<div class="a" style="left:235.00px;top:240.12px;width:12.50px;height:12.80px;background:#dcdcdc;border-radius:2px"></div>
<div class="t" style="left:237.00px;top:242.82px;font-size:8.3px;color:#666">PI</div>
<div class="t" style="left:249.40px;top:242.62px;font-size:8px;color:#24282c">PI4 Core Banking</div>
<div class="t" style="left:324.20px;top:242.82px;font-size:8.4px;color:#24282c">1.85</div>
<div class="t" style="left:366.00px;top:242.62px;font-size:9px;color:#1f2327;">3</div>
<div class="t" style="left:428.30px;top:242.62px;font-size:9px;color:#1f2327;font-weight:bold;">20</div>
<div class="t" style="left:513.20px;top:242.62px;font-size:9px;color:#1f2327;font-weight:bold;">13</div>
<div class="t" style="left:550.80px;top:242.62px;font-size:9px;color:#1f2327;">1</div>
<div class="t" style="left:602.70px;top:242.82px;font-size:8.3px;color:#24282c">Implementing</div>
</div>
<div class="a" style="left:60px;top:470px;width:647px;height:5px;background:#f1f1f1"></div>
<div class="a" style="left:60px;top:470px;width:472px;height:5px;background:#b3b3b3;border-radius:0 3px 3px 0"></div>
<div class="t" style="left:63.8px;top:486px;font-size:9px;font-weight:bold;color:#1f2327">1 – 10 of 21</div>
<div class="t" style="left:803.3px;top:185px;font-size:9.3px;font-weight:bold;color:#1b1e21">PROJECT PREDICTABILITY</div>
<div class="a" style="left:761.00px;top:212.50px;width:7.6px;height:7.6px;border-radius:50%;background:#fcf6d6;border:0.8px solid #efe9c2"></div>
<div class="a" style="left:793.70px;top:212.50px;width:7.6px;height:7.6px;border-radius:50%;background:#e3eecf;border:0.8px solid #d3e0bd"></div>
<div class="a" style="left:819.50px;top:212.50px;width:7.6px;height:7.6px;border-radius:50%;background:#f4cee0;border:0.8px solid #e8bcd0"></div>
<div class="t" style="left:770.8px;font-size:7.6px;color:#2a2e33;top:212.50px">MBB</div>
<div class="t" style="left:803.8px;font-size:7.6px;color:#2a2e33;top:212.50px">CB</div>
<div class="t" style="left:829.7px;font-size:7.6px;color:#2a2e33;top:212.50px">ONB</div>
<div class="t" style="left:851px;font-size:7.6px;color:#2a2e33;top:212.50px;color:#a4a8ac">+2</div>
<div class="t" style="left:864.9px;font-size:7.6px;color:#2a2e33;top:212.50px">Any Team</div>
<svg class="a" style="left:1214.8px;top:210.8px" width="12" height="12" viewBox="0 0 12 12"><path d="M9.5 6.5 A3.8 3.8 0 1 1 8.3 3.2" stroke="#8d9196" stroke-width="1.1" fill="none"/><path d="M7 1.8 L9.8 1.6 L9.6 4.4" stroke="#8d9196" stroke-width="1.1" fill="none"/></svg>
<div class="t" style="left:1231.5px;top:212.71px;font-size:9.1px;color:#8a8f94">Updated 3 minutes ago</div>
<svg class="a" style="left:1339.7px;top:211.1px" width="11" height="10" viewBox="0 0 11 10"><path d="M1 3.5 L1 9 L6.5 9" stroke="#111" stroke-width="1.2" fill="none"/><rect x="3" y="0.8" width="7.2" height="6" fill="#111"/><rect x="4.3" y="3" width="4.6" height="2.6" fill="#fff"/></svg>
<svg class="a" style="left:1344px;top:239.5px" width="12" height="12" viewBox="0 0 12 12"><circle cx="2.8" cy="2.8" r="2.1" fill="#f7dd3b"/><circle cx="8.2" cy="2.8" r="2.1" fill="#8dcdf9"/><circle cx="2.8" cy="8" r="2.1" fill="#ee6a45"/><circle cx="8.2" cy="8" r="2.1" fill="#a9c89a"/></svg>
<svg class="a" style="left:0;top:0" width="1366" height="852"><rect x="821.6" y="287.57" width="506.80000000000007" height="47.07" fill="#e8ebf3"/><line x1="821.6" y1="522.90" x2="1328.4" y2="522.90" stroke="#eaecf1" stroke-width="1"/><line x1="804.2" y1="522.90" x2="808.5" y2="522.90" stroke="#e3e6ec" stroke-width="1"/><text x="802.3" y="525.70" font-family="Liberation Sans" font-size="7.6" fill="#4a4f55" text-anchor="end">0%</text><line x1="821.6" y1="499.37" x2="1328.4" y2="499.37" stroke="#eaecf1" stroke-width="1"/><line x1="804.2" y1="499.37" x2="808.5" y2="499.37" stroke="#e3e6ec" stroke-width="1"/><text x="802.3" y="502.17" font-family="Liberation Sans" font-size="7.6" fill="#4a4f55" text-anchor="end">10%</text><line x1="821.6" y1="475.83" x2="1328.4" y2="475.83" stroke="#eaecf1" stroke-width="1"/><line x1="804.2" y1="475.83" x2="808.5" y2="475.83" stroke="#e3e6ec" stroke-width="1"/><text x="802.3" y="478.63" font-family="Liberation Sans" font-size="7.6" fill="#4a4f55" text-anchor="end">20%</text><line x1="821.6" y1="452.30" x2="1328.4" y2="452.30" stroke="#eaecf1" stroke-width="1"/><line x1="804.2" y1="452.30" x2="808.5" y2="452.30" stroke="#e3e6ec" stroke-width="1"/><text x="802.3" y="455.10" font-family="Liberation Sans" font-size="7.6" fill="#4a4f55" text-anchor="end">30%</text><line x1="821.6" y1="428.77" x2="1328.4" y2="428.77" stroke="#eaecf1" stroke-width="1"/><line x1="804.2" y1="428.77" x2="808.5" y2="428.77" stroke="#e3e6ec" stroke-width="1"/><text x="802.3" y="431.57" font-family="Liberation Sans" font-size="7.6" fill="#4a4f55" text-anchor="end">40%</text><line x1="821.6" y1="405.23" x2="1328.4" y2="405.23" stroke="#eaecf1" stroke-width="1"/><line x1="804.2" y1="405.23" x2="808.5" y2="405.23" stroke="#e3e6ec" stroke-width="1"/><text x="802.3" y="408.03" font-family="Liberation Sans" font-size="7.6" fill="#4a4f55" text-anchor="end">50%</text><line x1="821.6" y1="381.70" x2="1328.4" y2="381.70" stroke="#eaecf1" stroke-width="1"/><line x1="804.2" y1="381.70" x2="808.5" y2="381.70" stroke="#e3e6ec" stroke-width="1"/><text x="802.3" y="384.50" font-family="Liberation Sans" font-size="7.6" fill="#4a4f55" text-anchor="end">60%</text><line x1="821.6" y1="358.17" x2="1328.4" y2="358.17" stroke="#eaecf1" stroke-width="1"/><line x1="804.2" y1="358.17" x2="808.5" y2="358.17" stroke="#e3e6ec" stroke-width="1"/><text x="802.3" y="360.97" font-family="Liberation Sans" font-size="7.6" fill="#4a4f55" text-anchor="end">70%</text><line x1="821.6" y1="334.63" x2="1328.4" y2="334.63" stroke="#eaecf1" stroke-width="1"/><line x1="804.2" y1="334.63" x2="808.5" y2="334.63" stroke="#e3e6ec" stroke-width="1"/><text x="802.3" y="337.43" font-family="Liberation Sans" font-size="7.6" fill="#4a4f55" text-anchor="end">80%</text><line x1="821.6" y1="311.10" x2="1328.4" y2="311.10" stroke="#eaecf1" stroke-width="1"/><line x1="804.2" y1="311.10" x2="808.5" y2="311.10" stroke="#e3e6ec" stroke-width="1"/><text x="802.3" y="313.90" font-family="Liberation Sans" font-size="7.6" fill="#4a4f55" text-anchor="end">90%</text><line x1="821.6" y1="287.57" x2="1328.4" y2="287.57" stroke="#eaecf1" stroke-width="1"/><line x1="804.2" y1="287.57" x2="808.5" y2="287.57" stroke="#e3e6ec" stroke-width="1"/><text x="802.3" y="290.37" font-family="Liberation Sans" font-size="7.6" fill="#4a4f55" text-anchor="end">100%</text><line x1="821.6" y1="264.03" x2="1328.4" y2="264.03" stroke="#eaecf1" stroke-width="1"/><line x1="804.2" y1="264.03" x2="808.5" y2="264.03" stroke="#e3e6ec" stroke-width="1"/><text x="802.3" y="266.83" font-family="Liberation Sans" font-size="7.6" fill="#4a4f55" text-anchor="end">110%</text><line x1="821.6" y1="240.50" x2="1328.4" y2="240.50" stroke="#eaecf1" stroke-width="1"/><line x1="804.2" y1="240.50" x2="808.5" y2="240.50" stroke="#e3e6ec" stroke-width="1"/><text x="802.3" y="243.30" font-family="Liberation Sans" font-size="7.6" fill="#4a4f55" text-anchor="end">120%</text><line x1="821.60" y1="240.5" x2="821.60" y2="522.9" stroke="#eaecf1" stroke-width="1"/><line x1="821.60" y1="536.4" x2="821.60" y2="539.5" stroke="#e3e6ec" stroke-width="1"/><line x1="948.30" y1="240.5" x2="948.30" y2="522.9" stroke="#eaecf1" stroke-width="1"/><line x1="948.30" y1="536.4" x2="948.30" y2="539.5" stroke="#e3e6ec" stroke-width="1"/><line x1="1075.00" y1="240.5" x2="1075.00" y2="522.9" stroke="#eaecf1" stroke-width="1"/><line x1="1075.00" y1="536.4" x2="1075.00" y2="539.5" stroke="#e3e6ec" stroke-width="1"/><line x1="1201.70" y1="240.5" x2="1201.70" y2="522.9" stroke="#eaecf1" stroke-width="1"/><line x1="1201.70" y1="536.4" x2="1201.70" y2="539.5" stroke="#e3e6ec" stroke-width="1"/><line x1="1328.40" y1="240.5" x2="1328.40" y2="522.9" stroke="#eaecf1" stroke-width="1"/><line x1="1328.40" y1="536.4" x2="1328.40" y2="539.5" stroke="#e3e6ec" stroke-width="1"/><line x1="808.5" y1="240.5" x2="808.5" y2="522.9" stroke="#e3e6ec" stroke-width="1"/><line x1="821.6" y1="536.4" x2="1328.4" y2="536.4" stroke="#e3e6ec" stroke-width="1"/><text x="884.95" y="547.6" font-family="Liberation Sans" font-size="7.6" fill="#4a4f55" text-anchor="middle">PI1 Core Banking</text><text x="1011.65" y="547.6" font-family="Liberation Sans" font-size="7.6" fill="#4a4f55" text-anchor="middle">PI2 Core Banking</text><text x="1138.35" y="547.6" font-family="Liberation Sans" font-size="7.6" fill="#4a4f55" text-anchor="middle">PI3 Core Banking</text><text x="1265.05" y="547.6" font-family="Liberation Sans" font-size="7.6" fill="#4a4f55" text-anchor="middle">PI4 Core Banking</text><text x="1328.4" y="568.2" font-family="Liberation Sans" font-size="8.3" font-weight="bold" fill="#2a2e33" text-anchor="end">Program Increment</text><text transform="translate(771,300.7) rotate(-90)" font-family="Liberation Sans" font-size="8.0" font-weight="bold" fill="#3a3f45" text-anchor="middle">Program Objectives Achieved %</text><polyline points="884.95,287.57 1011.65,313.45 1138.35,301.69 1265.05,329.93" stroke="#ece04a" stroke-width="1.9" fill="none" stroke-linejoin="round"/><polyline points="884.95,325.22 1011.65,322.87 1138.35,327.57 1265.05,334.63" stroke="#f0785a" stroke-width="1.9" fill="none" stroke-linejoin="round"/><polyline points="884.95,325.22 1011.65,384.05 1138.35,346.40 1265.05,346.40" stroke="#7cc8f8" stroke-width="1.9" fill="none" stroke-linejoin="round"/><polyline points="884.95,344.05 1011.65,278.15 1138.35,346.40 1265.05,320.51" stroke="#3a9a5a" stroke-width="1.9" fill="none" stroke-linejoin="round"/><text x="884.95" y="284.50" font-family="Liberation Sans" font-size="7.6" fill="#2a2e33" text-anchor="middle">100%</text><text x="884.95" y="322.30" font-family="Liberation Sans" font-size="7.6" fill="#2a2e33" text-anchor="middle">84%</text><text x="884.95" y="357.80" font-family="Liberation Sans" font-size="7.6" fill="#2a2e33" text-anchor="middle">76%</text><text x="1011.65" y="275.10" font-family="Liberation Sans" font-size="7.6" fill="#2a2e33" text-anchor="middle">104%</text><text x="1011.65" y="398.40" font-family="Liberation Sans" font-size="7.6" fill="#2a2e33" text-anchor="middle">59%</text><text x="1138.35" y="298.10" font-family="Liberation Sans" font-size="7.6" fill="#2a2e33" text-anchor="middle">94%</text><text x="1138.35" y="324.10" font-family="Liberation Sans" font-size="7.6" fill="#2a2e33" text-anchor="middle">83%</text><text x="1138.35" y="359.80" font-family="Liberation Sans" font-size="7.6" fill="#2a2e33" text-anchor="middle">75%</text><text x="1265.05" y="317.70" font-family="Liberation Sans" font-size="7.6" fill="#2a2e33" text-anchor="middle">86%</text><text x="1265.05" y="359.80" font-family="Liberation Sans" font-size="7.6" fill="#2a2e33" text-anchor="middle">75%</text></svg>
<div class="t" style="left:62.2px;top:544px;font-size:9.1px;font-weight:bold;color:#1b1e21">PROJECT PI OBJECTIVES</div>
<div class="a" style="left:58px;top:566px;width:614.6px;height:286px;overflow:hidden">
<div class="a" style="left:205.00px;top:2.20px;width:1.00px;height:18.20px;background:#f0f1f2"></div>
<div class="a" style="left:242.00px;top:2.20px;width:1.00px;height:18.20px;background:#f0f1f2"></div>
<div class="a" style="left:272.00px;top:2.20px;width:1.00px;height:18.20px;background:#f0f1f2"></div>
<div class="a" style="left:346.00px;top:2.20px;width:1.00px;height:18.20px;background:#f0f1f2"></div>
<div class="a" style="left:431.00px;top:2.20px;width:1.00px;height:18.20px;background:#f0f1f2"></div>
<div class="a" style="left:0.00px;top:20.00px;width:614.60px;height:1.00px;background:#e9eaeb"></div>
<svg class="a" style="left:8.00px;top:7.00px;width:10.00px;height:8.00px;" viewBox="0 0 10 8"><path d="M1 2 L5 6 L9 2" stroke="#a9adb2" stroke-width="1" fill="none"/></svg>
<div class="t" style="left:23.60px;top:6.80px;font-size:7.7px;color:#4a86c6;letter-spacing:0.1px;border-bottom:1px dotted #c6cacf;padding-bottom:1px;">PROGRAM PIOBJECTIVES</div>
<div class="a" style="left:187.00px;top:5.40px;width:13.70px;height:12.40px;background:#5aa853;border-radius:2px"></div>
<svg class="a" style="left:187.00px;top:5.40px;width:13.70px;height:12.40px;" viewBox="0 0 13.7 12.4"><path d="M6.85 2.6 L6.85 9.8 M3.2 6.2 L10.5 6.2" stroke="#fff" stroke-width="1.5"/></svg>
<div class="t" style="left:209.60px;top:7.50px;font-size:8.2px;color:#6c7177;border-bottom:1px dotted #c6cacf;padding-bottom:1px;">ID</div>
<div class="t" style="left:246.70px;top:7.50px;font-size:8.2px;color:#6c7177;">State</div>
<div class="t" style="left:276.10px;top:7.50px;font-size:7.85px;color:#6c7177;">Agile Release Train</div>
<div class="t" style="left:350.20px;top:7.50px;font-size:7.95px;color:#6c7177;border-bottom:1px dotted #c6cacf;padding-bottom:1px;">Program Increment</div>
<div class="a" style="left:0.50px;top:20.40px;width:3.30px;height:22.60px;background:#3b78c2"></div>
<div class="a" style="left:1.60px;top:28.10px;width:1.20px;height:1.20px;background:#fff"></div>
<div class="a" style="left:1.60px;top:31.10px;width:1.20px;height:1.20px;background:#fff"></div>
<div class="a" style="left:1.60px;top:34.10px;width:1.20px;height:1.20px;background:#fff"></div>
<div class="a" style="left:205.00px;top:20.40px;width:1.00px;height:22.60px;background:#f3f3f4"></div>
<div class="a" style="left:242.00px;top:20.40px;width:1.00px;height:22.60px;background:#f3f3f4"></div>
<div class="a" style="left:272.00px;top:20.40px;width:1.00px;height:22.60px;background:#f3f3f4"></div>
<div class="a" style="left:346.00px;top:20.40px;width:1.00px;height:22.60px;background:#f3f3f4"></div>
<div class="a" style="left:431.00px;top:20.40px;width:1.00px;height:22.60px;background:#f3f3f4"></div>
<svg class="a" style="left:8.00px;top:27.70px;width:10.00px;height:8.00px;" viewBox="0 0 10 8"><path d="M1 2 L5 6 L9 2" stroke="#8d9196" stroke-width="1" fill="none"/></svg>
<div class="t" style="left:22.30px;top:27.10px;font-size:9.4px;color:#24282c;">Technologies that reduce operation...</div>
<div class="a" style="left:180.80px;top:26.40px;width:17.60px;height:10.60px;border:1px solid #c8cbcf;border-radius:6px"></div>
<div class="t" style="left:180.80px;top:27.90px;width:17.6px;text-align:center;font-size:7.6px;color:#777">9</div>
<div class="t" style="left:209.60px;top:27.50px;font-size:8.0px;color:#6c7177;">188870</div>
<div class="t" style="left:246.70px;top:27.50px;font-size:8.5px;color:#24282c;">Draft</div>
<div class="a" style="left:276.10px;top:25.60px;width:13.50px;height:12.20px;background:#dcdcdc;border-radius:2px"></div>
<div class="t" style="left:277.30px;top:27.80px;font-size:8px;color:#666;">AR</div>
<div class="t" style="left:291.00px;top:27.60px;font-size:7.8px;color:#24282c;">Core Banking</div>
<div class="a" style="left:350.20px;top:25.60px;width:11.80px;height:12.20px;background:#dcdcdc;border-radius:2px"></div>
<div class="t" style="left:352.00px;top:27.80px;font-size:8px;color:#666;">PI</div>
<div class="t" style="left:363.70px;top:27.60px;font-size:7.7px;color:#24282c;">PI1 Core Banking</div>
<div class="a" style="left:0.00px;top:43.00px;width:614.60px;height:3.00px;background:linear-gradient(rgba(0,0,0,0.07),rgba(0,0,0,0))"></div>
<div class="a" style="left:205.00px;top:44.00px;width:1.00px;height:17.50px;background:#f0f1f2"></div>
<div class="a" style="left:242.00px;top:44.00px;width:1.00px;height:17.50px;background:#f0f1f2"></div>
<div class="a" style="left:272.00px;top:44.00px;width:1.00px;height:17.50px;background:#f0f1f2"></div>
<div class="a" style="left:320.00px;top:44.00px;width:1.00px;height:17.50px;background:#f0f1f2"></div>
<div class="a" style="left:361.00px;top:44.00px;width:1.00px;height:17.50px;background:#f0f1f2"></div>
<div class="a" style="left:408.00px;top:44.00px;width:1.00px;height:17.50px;background:#f0f1f2"></div>
<div class="a" style="left:582.00px;top:44.00px;width:1.00px;height:17.50px;background:#f0f1f2"></div>
<div class="a" style="left:18.00px;top:61.00px;width:596.60px;height:1.00px;background:#e9eaeb"></div>
<div class="t" style="left:29.20px;top:47.60px;font-size:7.7px;color:#48a7bf;letter-spacing:0.1px;border-bottom:1px dotted #c6cacf;padding-bottom:1px;">TEAM PIOBJECTIVES</div>
<div class="a" style="left:171.40px;top:46.50px;width:15.80px;height:12.90px;border:1px solid #e3e5e8;border-radius:2px 0 0 2px;background:#fff"></div>
<svg class="a" style="left:173.00px;top:47.50px;width:12.00px;height:11.00px;" viewBox="0 0 12 11"><circle cx="5.3" cy="5" r="3.4" stroke="#9a9ea3" stroke-width="1" fill="none"/><path d="M7.8 7.5 L10.2 9.9" stroke="#9a9ea3" stroke-width="1.1"/></svg>
<div class="a" style="left:187.00px;top:46.50px;width:13.70px;height:12.90px;background:#5aa853;border-radius:0 2px 2px 0"></div>
<svg class="a" style="left:187.00px;top:46.50px;width:13.70px;height:12.90px;" viewBox="0 0 13.7 12.9"><path d="M6.85 2.8 L6.85 10.1 M3.2 6.45 L10.5 6.45" stroke="#fff" stroke-width="1.5"/></svg>
<div class="t" style="left:209.60px;top:48.50px;font-size:8.2px;color:#6c7177;border-bottom:1px dotted #c6cacf;padding-bottom:1px;">ID</div>
<div class="t" style="left:246.70px;top:48.50px;font-size:8.2px;color:#6c7177;">State</div>
<div class="t" style="left:276.10px;top:48.50px;font-size:7.95px;color:#6c7177;border-bottom:1px dotted #c6cacf;padding-bottom:1px;">Planned BV</div>
<div class="t" style="left:324.10px;top:48.50px;font-size:7.95px;color:#6c7177;border-bottom:1px dotted #c6cacf;padding-bottom:1px;">Actual BV</div>
<div class="t" style="left:365.40px;top:48.50px;font-size:8.2px;color:#6c7177;border-bottom:1px dotted #c6cacf;padding-bottom:1px;">Committed</div>
<div class="t" style="left:412.50px;top:48.50px;font-size:7.95px;color:#6c7177;">Program PI Objective</div>
<div class="t" style="left:587.30px;top:48.50px;font-size:7.95px;color:#6c7177;border-bottom:1px dotted #c6cacf;padding-bottom:1px;">Program Increment</div>
<div class="a" style="left:18.00px;top:61.50px;width:3.20px;height:22.62px;background:#2aa0b6"></div>
<div class="a" style="left:19.00px;top:69.21px;width:1.20px;height:1.20px;background:#fff"></div>
<div class="a" style="left:19.00px;top:72.21px;width:1.20px;height:1.20px;background:#fff"></div>
<div class="a" style="left:19.00px;top:75.21px;width:1.20px;height:1.20px;background:#fff"></div>
<div class="a" style="left:18.00px;top:83.52px;width:596.60px;height:1.00px;background:#ebeced"></div>
<div class="a" style="left:205.00px;top:61.50px;width:1.00px;height:21.62px;background:#f3f3f4"></div>
<div class="a" style="left:242.00px;top:61.50px;width:1.00px;height:21.62px;background:#f3f3f4"></div>
<div class="a" style="left:272.00px;top:61.50px;width:1.00px;height:21.62px;background:#f3f3f4"></div>
<div class="a" style="left:320.00px;top:61.50px;width:1.00px;height:21.62px;background:#f3f3f4"></div>
<div class="a" style="left:361.00px;top:61.50px;width:1.00px;height:21.62px;background:#f3f3f4"></div>
<div class="a" style="left:408.00px;top:61.50px;width:1.00px;height:21.62px;background:#f3f3f4"></div>
<div class="a" style="left:582.00px;top:61.50px;width:1.00px;height:21.62px;background:#f3f3f4"></div>
<div class="t" style="left:28.20px;top:68.61px;font-size:9.4px;color:#24282c;">Focus on technologies that reduce ope...</div>
<div class="t" style="left:209.60px;top:69.31px;font-size:8.1px;color:#6c7177;">187742</div>
<div class="t" style="left:246.70px;top:69.11px;font-size:8.5px;color:#24282c;">Draft</div>
<div class="t" style="left:276.10px;top:69.11px;font-size:8.5px;color:#24282c;">7</div>
<div class="t" style="left:324.10px;top:69.11px;font-size:8.5px;color:#24282c;">6</div>
<svg class="a" style="left:373.60px;top:67.61px;width:10.40px;height:10.40px;" viewBox="0 0 10.4 10.4"><circle cx="5.2" cy="5.2" r="5.2" fill="#4ea24a"/><path d="M2.7 5.3 L4.5 7 L7.8 3.6" stroke="#fff" stroke-width="1.5" fill="none"/></svg>
<div class="a" style="left:412.90px;top:66.91px;width:12.30px;height:11.80px;background:#dce8f6;border-radius:2px"></div>
<div class="t" style="left:414.00px;top:68.81px;font-size:8px;color:#4a86c6;">PP</div>
<div class="t" style="left:427.00px;top:69.11px;font-size:8px;color:#24282c;">Technologies that reduce operational risks</div>
<div class="a" style="left:587.30px;top:66.91px;width:11.80px;height:11.80px;background:#dcdcdc;border-radius:2px"></div>
<div class="t" style="left:589.00px;top:68.81px;font-size:8px;color:#666;">PI</div>
<div class="t" style="left:600.50px;top:69.41px;font-size:8.2px;color:#24282c;">PI1 Core Banking</div>
<div class="a" style="left:18.00px;top:84.12px;width:3.20px;height:22.62px;background:#2aa0b6"></div>
<div class="a" style="left:19.00px;top:91.83px;width:1.20px;height:1.20px;background:#fff"></div>
<div class="a" style="left:19.00px;top:94.83px;width:1.20px;height:1.20px;background:#fff"></div>
<div class="a" style="left:19.00px;top:97.83px;width:1.20px;height:1.20px;background:#fff"></div>
<div class="a" style="left:18.00px;top:106.14px;width:596.60px;height:1.00px;background:#ebeced"></div>
<div class="a" style="left:205.00px;top:84.12px;width:1.00px;height:21.62px;background:#f3f3f4"></div>
<div class="a" style="left:242.00px;top:84.12px;width:1.00px;height:21.62px;background:#f3f3f4"></div>
<div class="a" style="left:272.00px;top:84.12px;width:1.00px;height:21.62px;background:#f3f3f4"></div>
<div class="a" style="left:320.00px;top:84.12px;width:1.00px;height:21.62px;background:#f3f3f4"></div>
<div class="a" style="left:361.00px;top:84.12px;width:1.00px;height:21.62px;background:#f3f3f4"></div>
<div class="a" style="left:408.00px;top:84.12px;width:1.00px;height:21.62px;background:#f3f3f4"></div>
<div class="a" style="left:582.00px;top:84.12px;width:1.00px;height:21.62px;background:#f3f3f4"></div>
<div class="t" style="left:28.20px;top:91.23px;font-size:9.4px;color:#24282c;">Enable Value Realization from Conditio...</div>
<div class="t" style="left:209.60px;top:91.93px;font-size:8.1px;color:#6c7177;">187743</div>
<div class="t" style="left:246.70px;top:91.73px;font-size:8.5px;color:#24282c;">Draft</div>
<div class="t" style="left:276.10px;top:91.73px;font-size:8.5px;color:#24282c;">6</div>
<div class="t" style="left:324.10px;top:91.73px;font-size:8.5px;color:#24282c;">5</div>
<svg class="a" style="left:373.60px;top:90.23px;width:10.40px;height:10.40px;" viewBox="0 0 10.4 10.4"><circle cx="5.2" cy="5.2" r="5.2" fill="#4ea24a"/><path d="M2.7 5.3 L4.5 7 L7.8 3.6" stroke="#fff" stroke-width="1.5" fill="none"/></svg>
<div class="a" style="left:412.90px;top:89.53px;width:12.30px;height:11.80px;background:#dce8f6;border-radius:2px"></div>
<div class="t" style="left:414.00px;top:91.43px;font-size:8px;color:#4a86c6;">PP</div>
<div class="t" style="left:427.00px;top:91.73px;font-size:8px;color:#24282c;">Technologies that reduce operational risks</div>
<div class="a" style="left:587.30px;top:89.53px;width:11.80px;height:11.80px;background:#dcdcdc;border-radius:2px"></div>
<div class="t" style="left:589.00px;top:91.43px;font-size:8px;color:#666;">PI</div>
<div class="t" style="left:600.50px;top:92.03px;font-size:8.2px;color:#24282c;">PI1 Core Banking</div>
<div class="a" style="left:18.00px;top:106.74px;width:3.20px;height:22.62px;background:#2aa0b6"></div>
<div class="a" style="left:19.00px;top:114.46px;width:1.20px;height:1.20px;background:#fff"></div>
<div class="a" style="left:19.00px;top:117.46px;width:1.20px;height:1.20px;background:#fff"></div>
<div class="a" style="left:19.00px;top:120.46px;width:1.20px;height:1.20px;background:#fff"></div>
<div class="a" style="left:18.00px;top:128.77px;width:596.60px;height:1.00px;background:#ebeced"></div>
<div class="a" style="left:205.00px;top:106.74px;width:1.00px;height:21.62px;background:#f3f3f4"></div>
<div class="a" style="left:242.00px;top:106.74px;width:1.00px;height:21.62px;background:#f3f3f4"></div>
<div class="a" style="left:272.00px;top:106.74px;width:1.00px;height:21.62px;background:#f3f3f4"></div>
<div class="a" style="left:320.00px;top:106.74px;width:1.00px;height:21.62px;background:#f3f3f4"></div>
<div class="a" style="left:361.00px;top:106.74px;width:1.00px;height:21.62px;background:#f3f3f4"></div>
<div class="a" style="left:408.00px;top:106.74px;width:1.00px;height:21.62px;background:#f3f3f4"></div>
<div class="a" style="left:582.00px;top:106.74px;width:1.00px;height:21.62px;background:#f3f3f4"></div>
<div class="t" style="left:28.20px;top:113.86px;font-size:9.4px;color:#24282c;">To promote the efficient operations of ...</div>
<div class="t" style="left:209.60px;top:114.56px;font-size:8.1px;color:#6c7177;">187758</div>
<div class="t" style="left:246.70px;top:114.36px;font-size:8.5px;color:#24282c;">Draft</div>
<div class="t" style="left:276.10px;top:114.36px;font-size:8.5px;color:#24282c;">7</div>
<div class="t" style="left:324.10px;top:114.36px;font-size:8.5px;color:#24282c;">6</div>
<svg class="a" style="left:373.60px;top:112.86px;width:10.40px;height:10.40px;" viewBox="0 0 10.4 10.4"><circle cx="5.2" cy="5.2" r="5.2" fill="#4ea24a"/><path d="M2.7 5.3 L4.5 7 L7.8 3.6" stroke="#fff" stroke-width="1.5" fill="none"/></svg>
<div class="a" style="left:412.90px;top:112.16px;width:12.30px;height:11.80px;background:#dce8f6;border-radius:2px"></div>
<div class="t" style="left:414.00px;top:114.06px;font-size:8px;color:#4a86c6;">PP</div>
<div class="t" style="left:427.00px;top:114.36px;font-size:8px;color:#24282c;">Technologies that reduce operational risks</div>
<div class="a" style="left:587.30px;top:112.16px;width:11.80px;height:11.80px;background:#dcdcdc;border-radius:2px"></div>
<div class="t" style="left:589.00px;top:114.06px;font-size:8px;color:#666;">PI</div>
<div class="t" style="left:600.50px;top:114.66px;font-size:8.2px;color:#24282c;">PI1 Core Banking</div>
<div class="a" style="left:18.00px;top:129.37px;width:3.20px;height:22.62px;background:#2aa0b6"></div>
<div class="a" style="left:19.00px;top:137.08px;width:1.20px;height:1.20px;background:#fff"></div>
<div class="a" style="left:19.00px;top:140.08px;width:1.20px;height:1.20px;background:#fff"></div>
<div class="a" style="left:19.00px;top:143.08px;width:1.20px;height:1.20px;background:#fff"></div>
<div class="a" style="left:18.00px;top:151.39px;width:596.60px;height:1.00px;background:#ebeced"></div>
<div class="a" style="left:205.00px;top:129.37px;width:1.00px;height:21.62px;background:#f3f3f4"></div>
<div class="a" style="left:242.00px;top:129.37px;width:1.00px;height:21.62px;background:#f3f3f4"></div>
<div class="a" style="left:272.00px;top:129.37px;width:1.00px;height:21.62px;background:#f3f3f4"></div>
<div class="a" style="left:320.00px;top:129.37px;width:1.00px;height:21.62px;background:#f3f3f4"></div>
<div class="a" style="left:361.00px;top:129.37px;width:1.00px;height:21.62px;background:#f3f3f4"></div>
<div class="a" style="left:408.00px;top:129.37px;width:1.00px;height:21.62px;background:#f3f3f4"></div>
<div class="a" style="left:582.00px;top:129.37px;width:1.00px;height:21.62px;background:#f3f3f4"></div>
<div class="t" style="left:28.20px;top:136.48px;font-size:9.4px;color:#24282c;">Enhance Risk Governance and Oversight</div>
<div class="t" style="left:209.60px;top:137.18px;font-size:8.1px;color:#6c7177;">187762</div>
<div class="t" style="left:246.70px;top:136.98px;font-size:8.5px;color:#24282c;">Draft</div>
<div class="t" style="left:276.10px;top:136.98px;font-size:8.5px;color:#24282c;">9</div>
<div class="t" style="left:324.10px;top:136.98px;font-size:8.5px;color:#24282c;">8</div>
<svg class="a" style="left:373.60px;top:135.48px;width:10.40px;height:10.40px;" viewBox="0 0 10.4 10.4"><circle cx="5.2" cy="5.2" r="5.2" fill="#4ea24a"/><path d="M2.7 5.3 L4.5 7 L7.8 3.6" stroke="#fff" stroke-width="1.5" fill="none"/></svg>
<div class="a" style="left:412.90px;top:134.78px;width:12.30px;height:11.80px;background:#dce8f6;border-radius:2px"></div>
<div class="t" style="left:414.00px;top:136.68px;font-size:8px;color:#4a86c6;">PP</div>
<div class="t" style="left:427.00px;top:136.98px;font-size:8px;color:#24282c;">Technologies that reduce operational risks</div>
<div class="a" style="left:587.30px;top:134.78px;width:11.80px;height:11.80px;background:#dcdcdc;border-radius:2px"></div>
<div class="t" style="left:589.00px;top:136.68px;font-size:8px;color:#666;">PI</div>
<div class="t" style="left:600.50px;top:137.28px;font-size:8.2px;color:#24282c;">PI1 Core Banking</div>
<div class="a" style="left:18.00px;top:151.99px;width:3.20px;height:22.62px;background:#2aa0b6"></div>
<div class="a" style="left:19.00px;top:159.70px;width:1.20px;height:1.20px;background:#fff"></div>
<div class="a" style="left:19.00px;top:162.70px;width:1.20px;height:1.20px;background:#fff"></div>
<div class="a" style="left:19.00px;top:165.70px;width:1.20px;height:1.20px;background:#fff"></div>
<div class="a" style="left:18.00px;top:174.01px;width:596.60px;height:1.00px;background:#ebeced"></div>
<div class="a" style="left:205.00px;top:151.99px;width:1.00px;height:21.62px;background:#f3f3f4"></div>
<div class="a" style="left:242.00px;top:151.99px;width:1.00px;height:21.62px;background:#f3f3f4"></div>
<div class="a" style="left:272.00px;top:151.99px;width:1.00px;height:21.62px;background:#f3f3f4"></div>
<div class="a" style="left:320.00px;top:151.99px;width:1.00px;height:21.62px;background:#f3f3f4"></div>
<div class="a" style="left:361.00px;top:151.99px;width:1.00px;height:21.62px;background:#f3f3f4"></div>
<div class="a" style="left:408.00px;top:151.99px;width:1.00px;height:21.62px;background:#f3f3f4"></div>
<div class="a" style="left:582.00px;top:151.99px;width:1.00px;height:21.62px;background:#f3f3f4"></div>
<div class="t" style="left:28.20px;top:159.10px;font-size:9.4px;color:#24282c;">Increase Financial Assets</div>
<div class="t" style="left:209.60px;top:159.80px;font-size:8.1px;color:#6c7177;">187774</div>
<div class="t" style="left:246.70px;top:159.60px;font-size:8.5px;color:#24282c;">Draft</div>
<div class="t" style="left:276.10px;top:159.60px;font-size:8.5px;color:#24282c;">7</div>
<div class="t" style="left:324.10px;top:159.60px;font-size:8.5px;color:#24282c;">6</div>
<svg class="a" style="left:373.60px;top:158.10px;width:10.40px;height:10.40px;" viewBox="0 0 10.4 10.4"><circle cx="5.2" cy="5.2" r="5.2" fill="#4ea24a"/><path d="M2.7 5.3 L4.5 7 L7.8 3.6" stroke="#fff" stroke-width="1.5" fill="none"/></svg>
<div class="a" style="left:412.90px;top:157.40px;width:12.30px;height:11.80px;background:#dce8f6;border-radius:2px"></div>
<div class="t" style="left:414.00px;top:159.30px;font-size:8px;color:#4a86c6;">PP</div>
<div class="t" style="left:427.00px;top:159.60px;font-size:8px;color:#24282c;">Technologies that reduce operational risks</div>
<div class="a" style="left:587.30px;top:157.40px;width:11.80px;height:11.80px;background:#dcdcdc;border-radius:2px"></div>
<div class="t" style="left:589.00px;top:159.30px;font-size:8px;color:#666;">PI</div>
<div class="t" style="left:600.50px;top:159.90px;font-size:8.2px;color:#24282c;">PI1 Core Banking</div>
<div class="a" style="left:18.00px;top:174.61px;width:3.20px;height:22.62px;background:#2aa0b6"></div>
<div class="a" style="left:19.00px;top:182.32px;width:1.20px;height:1.20px;background:#fff"></div>
<div class="a" style="left:19.00px;top:185.32px;width:1.20px;height:1.20px;background:#fff"></div>
<div class="a" style="left:19.00px;top:188.32px;width:1.20px;height:1.20px;background:#fff"></div>
<div class="a" style="left:18.00px;top:196.63px;width:596.60px;height:1.00px;background:#ebeced"></div>
<div class="a" style="left:205.00px;top:174.61px;width:1.00px;height:21.62px;background:#f3f3f4"></div>
<div class="a" style="left:242.00px;top:174.61px;width:1.00px;height:21.62px;background:#f3f3f4"></div>
<div class="a" style="left:272.00px;top:174.61px;width:1.00px;height:21.62px;background:#f3f3f4"></div>
<div class="a" style="left:320.00px;top:174.61px;width:1.00px;height:21.62px;background:#f3f3f4"></div>
<div class="a" style="left:361.00px;top:174.61px;width:1.00px;height:21.62px;background:#f3f3f4"></div>
<div class="a" style="left:408.00px;top:174.61px;width:1.00px;height:21.62px;background:#f3f3f4"></div>
<div class="a" style="left:582.00px;top:174.61px;width:1.00px;height:21.62px;background:#f3f3f4"></div>
<div class="t" style="left:28.20px;top:181.72px;font-size:9.4px;color:#24282c;">Focus on Financial Technology</div>
<div class="t" style="left:209.60px;top:182.42px;font-size:8.1px;color:#6c7177;">187772</div>
<div class="t" style="left:246.70px;top:182.22px;font-size:8.5px;color:#24282c;">Draft</div>
<div class="t" style="left:276.10px;top:182.22px;font-size:8.5px;color:#24282c;">3</div>
<div class="t" style="left:324.10px;top:182.22px;font-size:8.5px;color:#24282c;">1</div>
<svg class="a" style="left:373.60px;top:180.72px;width:10.40px;height:10.40px;" viewBox="0 0 10.4 10.4"><circle cx="5.2" cy="5.2" r="5.2" fill="#4ea24a"/><path d="M2.7 5.3 L4.5 7 L7.8 3.6" stroke="#fff" stroke-width="1.5" fill="none"/></svg>
<div class="a" style="left:412.90px;top:180.02px;width:12.30px;height:11.80px;background:#dce8f6;border-radius:2px"></div>
<div class="t" style="left:414.00px;top:181.92px;font-size:8px;color:#4a86c6;">PP</div>
<div class="t" style="left:427.00px;top:182.22px;font-size:8px;color:#24282c;">Technologies that reduce operational risks</div>
<div class="a" style="left:587.30px;top:180.02px;width:11.80px;height:11.80px;background:#dcdcdc;border-radius:2px"></div>
<div class="t" style="left:589.00px;top:181.92px;font-size:8px;color:#666;">PI</div>
<div class="t" style="left:600.50px;top:182.52px;font-size:8.2px;color:#24282c;">PI1 Core Banking</div>
<div class="a" style="left:18.00px;top:197.23px;width:3.20px;height:22.62px;background:#2aa0b6"></div>
<div class="a" style="left:19.00px;top:204.94px;width:1.20px;height:1.20px;background:#fff"></div>
<div class="a" style="left:19.00px;top:207.94px;width:1.20px;height:1.20px;background:#fff"></div>
<div class="a" style="left:19.00px;top:210.94px;width:1.20px;height:1.20px;background:#fff"></div>
<div class="a" style="left:18.00px;top:219.26px;width:596.60px;height:1.00px;background:#ebeced"></div>
<div class="a" style="left:205.00px;top:197.23px;width:1.00px;height:21.62px;background:#f3f3f4"></div>
<div class="a" style="left:242.00px;top:197.23px;width:1.00px;height:21.62px;background:#f3f3f4"></div>
<div class="a" style="left:272.00px;top:197.23px;width:1.00px;height:21.62px;background:#f3f3f4"></div>
<div class="a" style="left:320.00px;top:197.23px;width:1.00px;height:21.62px;background:#f3f3f4"></div>
<div class="a" style="left:361.00px;top:197.23px;width:1.00px;height:21.62px;background:#f3f3f4"></div>
<div class="a" style="left:408.00px;top:197.23px;width:1.00px;height:21.62px;background:#f3f3f4"></div>
<div class="a" style="left:582.00px;top:197.23px;width:1.00px;height:21.62px;background:#f3f3f4"></div>
<div class="t" style="left:28.20px;top:204.34px;font-size:9.4px;color:#24282c;">Add first column with Index to lists</div>
<div class="t" style="left:209.60px;top:205.04px;font-size:8.1px;color:#6c7177;">188555</div>
<div class="t" style="left:246.70px;top:204.84px;font-size:8.5px;color:#24282c;">Draft</div>
<div class="t" style="left:276.10px;top:204.84px;font-size:8.5px;color:#24282c;">8</div>
<div class="t" style="left:324.10px;top:204.84px;font-size:8.5px;color:#24282c;">6</div>
<svg class="a" style="left:373.60px;top:203.34px;width:10.40px;height:10.40px;" viewBox="0 0 10.4 10.4"><circle cx="5.2" cy="5.2" r="5.2" fill="#4ea24a"/><path d="M2.7 5.3 L4.5 7 L7.8 3.6" stroke="#fff" stroke-width="1.5" fill="none"/></svg>
<div class="a" style="left:412.90px;top:202.64px;width:12.30px;height:11.80px;background:#dce8f6;border-radius:2px"></div>
<div class="t" style="left:414.00px;top:204.54px;font-size:8px;color:#4a86c6;">PP</div>
<div class="t" style="left:427.00px;top:204.84px;font-size:8px;color:#24282c;">Technologies that reduce operational risks</div>
<div class="a" style="left:587.30px;top:202.64px;width:11.80px;height:11.80px;background:#dcdcdc;border-radius:2px"></div>
<div class="t" style="left:589.00px;top:204.54px;font-size:8px;color:#666;">PI</div>
<div class="t" style="left:600.50px;top:205.14px;font-size:8.2px;color:#24282c;">PI1 Core Banking</div>
<div class="a" style="left:18.00px;top:219.86px;width:3.20px;height:22.62px;background:#2aa0b6"></div>
<div class="a" style="left:19.00px;top:227.57px;width:1.20px;height:1.20px;background:#fff"></div>
<div class="a" style="left:19.00px;top:230.57px;width:1.20px;height:1.20px;background:#fff"></div>
<div class="a" style="left:19.00px;top:233.57px;width:1.20px;height:1.20px;background:#fff"></div>
<div class="a" style="left:18.00px;top:241.88px;width:596.60px;height:1.00px;background:#ebeced"></div>
<div class="a" style="left:205.00px;top:219.86px;width:1.00px;height:21.62px;background:#f3f3f4"></div>
<div class="a" style="left:242.00px;top:219.86px;width:1.00px;height:21.62px;background:#f3f3f4"></div>
<div class="a" style="left:272.00px;top:219.86px;width:1.00px;height:21.62px;background:#f3f3f4"></div>
<div class="a" style="left:320.00px;top:219.86px;width:1.00px;height:21.62px;background:#f3f3f4"></div>
<div class="a" style="left:361.00px;top:219.86px;width:1.00px;height:21.62px;background:#f3f3f4"></div>
<div class="a" style="left:408.00px;top:219.86px;width:1.00px;height:21.62px;background:#f3f3f4"></div>
<div class="a" style="left:582.00px;top:219.86px;width:1.00px;height:21.62px;background:#f3f3f4"></div>
<div class="t" style="left:28.20px;top:226.97px;font-size:9.4px;color:#24282c;">Customer satisfaction 82% or higher</div>
<div class="t" style="left:209.60px;top:227.67px;font-size:8.1px;color:#6c7177;">188561</div>
<div class="t" style="left:246.70px;top:227.47px;font-size:8.5px;color:#24282c;">Draft</div>
<div class="t" style="left:276.10px;top:227.47px;font-size:8.5px;color:#24282c;">3</div>
<div class="t" style="left:324.10px;top:227.47px;font-size:8.5px;color:#24282c;">2</div>
<svg class="a" style="left:373.60px;top:225.97px;width:10.40px;height:10.40px;" viewBox="0 0 10.4 10.4"><circle cx="5.2" cy="5.2" r="5.2" fill="#c0263f"/><path d="M3.3 3.3 L7.1 7.1 M7.1 3.3 L3.3 7.1" stroke="#fff" stroke-width="1.4"/></svg>
<div class="a" style="left:412.90px;top:225.27px;width:12.30px;height:11.80px;background:#dce8f6;border-radius:2px"></div>
<div class="t" style="left:414.00px;top:227.17px;font-size:8px;color:#4a86c6;">PP</div>
<div class="t" style="left:427.00px;top:227.47px;font-size:8px;color:#24282c;">Technologies that reduce operational risks</div>
<div class="a" style="left:587.30px;top:225.27px;width:11.80px;height:11.80px;background:#dcdcdc;border-radius:2px"></div>
<div class="t" style="left:589.00px;top:227.17px;font-size:8px;color:#666;">PI</div>
<div class="t" style="left:600.50px;top:227.77px;font-size:8.2px;color:#24282c;">PI1 Core Banking</div>
<div class="a" style="left:18.00px;top:242.48px;width:3.20px;height:22.62px;background:#2aa0b6"></div>
<div class="a" style="left:19.00px;top:250.19px;width:1.20px;height:1.20px;background:#fff"></div>
<div class="a" style="left:19.00px;top:253.19px;width:1.20px;height:1.20px;background:#fff"></div>
<div class="a" style="left:19.00px;top:256.19px;width:1.20px;height:1.20px;background:#fff"></div>
<div class="a" style="left:18.00px;top:264.50px;width:596.60px;height:1.00px;background:#ebeced"></div>
<div class="a" style="left:205.00px;top:242.48px;width:1.00px;height:21.62px;background:#f3f3f4"></div>
<div class="a" style="left:242.00px;top:242.48px;width:1.00px;height:21.62px;background:#f3f3f4"></div>
<div class="a" style="left:272.00px;top:242.48px;width:1.00px;height:21.62px;background:#f3f3f4"></div>
<div class="a" style="left:320.00px;top:242.48px;width:1.00px;height:21.62px;background:#f3f3f4"></div>
<div class="a" style="left:361.00px;top:242.48px;width:1.00px;height:21.62px;background:#f3f3f4"></div>
<div class="a" style="left:408.00px;top:242.48px;width:1.00px;height:21.62px;background:#f3f3f4"></div>
<div class="a" style="left:582.00px;top:242.48px;width:1.00px;height:21.62px;background:#f3f3f4"></div>
<div class="t" style="left:28.20px;top:249.59px;font-size:9.4px;color:#24282c;">Support junior team members to impr...</div>
<div class="t" style="left:209.60px;top:250.29px;font-size:8.1px;color:#6c7177;">188562</div>
<div class="t" style="left:246.70px;top:250.09px;font-size:8.5px;color:#24282c;">Draft</div>
<div class="t" style="left:276.10px;top:250.09px;font-size:8.5px;color:#24282c;">3</div>
<div class="t" style="left:324.10px;top:250.09px;font-size:8.5px;color:#24282c;">2</div>
<svg class="a" style="left:373.60px;top:248.59px;width:10.40px;height:10.40px;" viewBox="0 0 10.4 10.4"><circle cx="5.2" cy="5.2" r="5.2" fill="#4ea24a"/><path d="M2.7 5.3 L4.5 7 L7.8 3.6" stroke="#fff" stroke-width="1.5" fill="none"/></svg>
<div class="a" style="left:412.90px;top:247.89px;width:12.30px;height:11.80px;background:#dce8f6;border-radius:2px"></div>
<div class="t" style="left:414.00px;top:249.79px;font-size:8px;color:#4a86c6;">PP</div>
<div class="t" style="left:427.00px;top:250.09px;font-size:8px;color:#24282c;">Technologies that reduce operational risks</div>
<div class="a" style="left:587.30px;top:247.89px;width:11.80px;height:11.80px;background:#dcdcdc;border-radius:2px"></div>
<div class="t" style="left:589.00px;top:249.79px;font-size:8px;color:#666;">PI</div>
<div class="t" style="left:600.50px;top:250.39px;font-size:8.2px;color:#24282c;">PI1 Core Banking</div>
<div class="a" style="left:0.00px;top:265.00px;width:614.60px;height:1.00px;background:#e6e7e9"></div>
<div class="a" style="left:0.50px;top:265.10px;width:3.30px;height:22.60px;background:#3b78c2"></div>
<div class="a" style="left:1.60px;top:272.80px;width:1.20px;height:1.20px;background:#fff"></div>
<div class="a" style="left:1.60px;top:275.80px;width:1.20px;height:1.20px;background:#fff"></div>
<div class="a" style="left:1.60px;top:278.80px;width:1.20px;height:1.20px;background:#fff"></div>
<div class="a" style="left:205.00px;top:265.10px;width:1.00px;height:22.60px;background:#f3f3f4"></div>
<div class="a" style="left:242.00px;top:265.10px;width:1.00px;height:22.60px;background:#f3f3f4"></div>
<div class="a" style="left:272.00px;top:265.10px;width:1.00px;height:22.60px;background:#f3f3f4"></div>
<div class="a" style="left:346.00px;top:265.10px;width:1.00px;height:22.60px;background:#f3f3f4"></div>
<div class="a" style="left:431.00px;top:265.10px;width:1.00px;height:22.60px;background:#f3f3f4"></div>
<svg class="a" style="left:10.50px;top:271.40px;width:7.00px;height:10.00px;" viewBox="0 0 7 10"><path d="M1.2 1 L5.5 5 L1.2 9" stroke="#8d9196" stroke-width="1" fill="none"/></svg>
<div class="t" style="left:22.30px;top:271.80px;font-size:9.4px;color:#24282c;">Export reports of Product B to .pdf</div>
<div class="a" style="left:180.80px;top:271.10px;width:17.60px;height:10.60px;border:1px solid #c8cbcf;border-radius:6px"></div>
<div class="t" style="left:180.80px;top:272.60px;width:17.6px;text-align:center;font-size:7.6px;color:#777">11</div>
<div class="t" style="left:209.60px;top:272.20px;font-size:8.0px;color:#6c7177;">188921</div>
<div class="t" style="left:246.70px;top:272.20px;font-size:8.5px;color:#24282c;">Draft</div>
<div class="a" style="left:276.10px;top:270.30px;width:13.50px;height:12.20px;background:#dcdcdc;border-radius:2px"></div>
<div class="t" style="left:277.30px;top:272.50px;font-size:8px;color:#666;">AR</div>
<div class="t" style="left:291.00px;top:272.30px;font-size:7.8px;color:#24282c;">Core Banking</div>
<div class="a" style="left:350.20px;top:270.30px;width:11.80px;height:12.20px;background:#dcdcdc;border-radius:2px"></div>
<div class="t" style="left:352.00px;top:272.50px;font-size:8px;color:#666;">PI</div>
<div class="t" style="left:363.70px;top:272.30px;font-size:7.7px;color:#24282c;">PI2 Core Banking</div>
</div>
<div class="t" style="left:716.4px;top:606px;font-size:9.4px;font-weight:bold;color:#1b1e21">PI CAPACITY CHECK</div>
<div class="a" style="left:712.20px;top:635.70px;width:7.6px;height:7.6px;border-radius:50%;background:#fcf6d6;border:0.8px solid #efe9c2"></div>
<div class="a" style="left:747.60px;top:635.70px;width:7.6px;height:7.6px;border-radius:50%;background:#e3eecf;border:0.8px solid #d3e0bd"></div>
<div class="a" style="left:775.90px;top:635.70px;width:7.6px;height:7.6px;border-radius:50%;background:#f4cee0;border:0.8px solid #e8bcd0"></div>
<div class="t" style="left:722.9px;font-size:8.3px;color:#2a2e33;top:635.35px">MBB</div>
<div class="t" style="left:758.4px;font-size:8.3px;color:#2a2e33;top:635.35px">CB</div>
<div class="t" style="left:786.7px;font-size:8.3px;color:#2a2e33;top:635.35px">ONB</div>
<div class="t" style="left:810px;font-size:8.3px;color:#2a2e33;top:635.35px;color:#a4a8ac">+2</div>
<div class="t" style="left:824.8px;font-size:8.3px;color:#2a2e33;top:635.35px">Any Team</div>
<svg class="a" style="left:1206.9px;top:634px" width="12" height="12" viewBox="0 0 12 12"><path d="M9.5 6.5 A3.8 3.8 0 1 1 8.3 3.2" stroke="#8d9196" stroke-width="1.1" fill="none"/><path d="M7 1.8 L9.8 1.6 L9.6 4.4" stroke="#8d9196" stroke-width="1.1" fill="none"/></svg>
<div class="t" style="left:1224.9px;top:635.54px;font-size:9.9px;color:#8a8f94">Updated 3 minutes ago</div>
<svg class="a" style="left:1342.8px;top:634.7px" width="11" height="10" viewBox="0 0 11 10"><path d="M1 3.5 L1 9 L6.5 9" stroke="#111" stroke-width="1.2" fill="none"/><rect x="3" y="0.8" width="7.2" height="6" fill="#111"/><rect x="4.3" y="3" width="4.6" height="2.6" fill="#fff"/></svg>
<svg class="a" style="left:1347.5px;top:665px" width="12" height="12" viewBox="0 0 12 12"><circle cx="2.8" cy="2.8" r="2.1" fill="#f7dd3b"/><circle cx="8.2" cy="2.8" r="2.1" fill="#8dcdf9"/><circle cx="2.8" cy="8" r="2.1" fill="#ee6a45"/><circle cx="8.2" cy="8" r="2.1" fill="#a9c89a"/></svg>
<svg class="a" style="left:0;top:0" width="1366" height="852"><defs><clipPath id="cc"><rect x="700" y="600" width="666" height="246"/></clipPath></defs><g clip-path="url(#cc)"><line x1="751.6" y1="666.20" x2="1330" y2="666.20" stroke="#eaecf1" stroke-width="1"/><line x1="732.8" y1="666.20" x2="737.5" y2="666.20" stroke="#e3e6ec" stroke-width="1"/><text x="730.6" y="669.00" font-family="Liberation Sans" font-size="8.2" fill="#4a4f55" text-anchor="end">130</text><line x1="751.6" y1="689.90" x2="1330" y2="689.90" stroke="#eaecf1" stroke-width="1"/><line x1="732.8" y1="689.90" x2="737.5" y2="689.90" stroke="#e3e6ec" stroke-width="1"/><text x="730.6" y="692.70" font-family="Liberation Sans" font-size="8.2" fill="#4a4f55" text-anchor="end">120</text><line x1="751.6" y1="713.60" x2="1330" y2="713.60" stroke="#eaecf1" stroke-width="1"/><line x1="732.8" y1="713.60" x2="737.5" y2="713.60" stroke="#e3e6ec" stroke-width="1"/><text x="730.6" y="716.40" font-family="Liberation Sans" font-size="8.2" fill="#4a4f55" text-anchor="end">110</text><line x1="751.6" y1="737.30" x2="1330" y2="737.30" stroke="#eaecf1" stroke-width="1"/><line x1="732.8" y1="737.30" x2="737.5" y2="737.30" stroke="#e3e6ec" stroke-width="1"/><text x="730.6" y="740.10" font-family="Liberation Sans" font-size="8.2" fill="#4a4f55" text-anchor="end">100</text><line x1="751.6" y1="761.00" x2="1330" y2="761.00" stroke="#eaecf1" stroke-width="1"/><line x1="732.8" y1="761.00" x2="737.5" y2="761.00" stroke="#e3e6ec" stroke-width="1"/><text x="730.6" y="763.80" font-family="Liberation Sans" font-size="8.2" fill="#4a4f55" text-anchor="end">90</text><line x1="751.6" y1="784.70" x2="1330" y2="784.70" stroke="#eaecf1" stroke-width="1"/><line x1="732.8" y1="784.70" x2="737.5" y2="784.70" stroke="#e3e6ec" stroke-width="1"/><text x="730.6" y="787.50" font-family="Liberation Sans" font-size="8.2" fill="#4a4f55" text-anchor="end">80</text><line x1="751.6" y1="808.40" x2="1330" y2="808.40" stroke="#eaecf1" stroke-width="1"/><line x1="732.8" y1="808.40" x2="737.5" y2="808.40" stroke="#e3e6ec" stroke-width="1"/><text x="730.6" y="811.20" font-family="Liberation Sans" font-size="8.2" fill="#4a4f55" text-anchor="end">70</text><line x1="751.6" y1="832.10" x2="1330" y2="832.10" stroke="#eaecf1" stroke-width="1"/><line x1="732.8" y1="832.10" x2="737.5" y2="832.10" stroke="#e3e6ec" stroke-width="1"/><text x="730.6" y="834.90" font-family="Liberation Sans" font-size="8.2" fill="#4a4f55" text-anchor="end">60</text><line x1="751.6" y1="855.80" x2="1330" y2="855.80" stroke="#eaecf1" stroke-width="1"/><line x1="732.8" y1="855.80" x2="737.5" y2="855.80" stroke="#e3e6ec" stroke-width="1"/><text x="730.6" y="858.60" font-family="Liberation Sans" font-size="8.2" fill="#4a4f55" text-anchor="end">50</text><line x1="751.60" y1="666.2" x2="751.60" y2="852" stroke="#eaecf1" stroke-width="1"/><line x1="867.28" y1="666.2" x2="867.28" y2="852" stroke="#eaecf1" stroke-width="1"/><line x1="982.96" y1="666.2" x2="982.96" y2="852" stroke="#eaecf1" stroke-width="1"/><line x1="1098.64" y1="666.2" x2="1098.64" y2="852" stroke="#eaecf1" stroke-width="1"/><line x1="1214.32" y1="666.2" x2="1214.32" y2="852" stroke="#eaecf1" stroke-width="1"/><line x1="1330.00" y1="666.2" x2="1330.00" y2="852" stroke="#eaecf1" stroke-width="1"/><line x1="737.5" y1="666.2" x2="737.5" y2="852" stroke="#e3e6ec" stroke-width="1"/><rect x="784.14" y="704.12" width="25.3" height="141.88" fill="#f4967a"/><rect x="809.94" y="756.26" width="25.3" height="89.74" fill="#8dcffb"/><text x="796.79" y="702.12" font-family="Liberation Sans" font-size="7.6" fill="#2a2e33" text-anchor="middle">114</text><text x="822.59" y="754.26" font-family="Liberation Sans" font-size="7.6" fill="#2a2e33" text-anchor="middle">92</text><rect x="899.82" y="761.00" width="25.3" height="85.00" fill="#f4967a"/><rect x="925.62" y="775.22" width="25.3" height="70.78" fill="#8dcffb"/><text x="912.47" y="759.00" font-family="Liberation Sans" font-size="7.6" fill="#2a2e33" text-anchor="middle">90</text><text x="938.27" y="773.22" font-family="Liberation Sans" font-size="7.6" fill="#2a2e33" text-anchor="middle">84</text><rect x="1015.50" y="718.34" width="25.3" height="127.66" fill="#f4967a"/><rect x="1041.30" y="746.78" width="25.3" height="99.22" fill="#8dcffb"/><text x="1028.15" y="716.34" font-family="Liberation Sans" font-size="7.6" fill="#2a2e33" text-anchor="middle">108</text><text x="1053.95" y="744.78" font-family="Liberation Sans" font-size="7.6" fill="#2a2e33" text-anchor="middle">96</text><rect x="1131.18" y="772.85" width="25.3" height="73.15" fill="#f4967a"/><rect x="1156.98" y="822.62" width="25.3" height="23.38" fill="#8dcffb"/><text x="1143.83" y="770.85" font-family="Liberation Sans" font-size="7.6" fill="#2a2e33" text-anchor="middle">85</text><text x="1169.63" y="820.62" font-family="Liberation Sans" font-size="7.6" fill="#2a2e33" text-anchor="middle">64</text><rect x="1246.86" y="675.68" width="25.3" height="170.32" fill="#f4967a"/><text x="1259.51" y="694.18" font-family="Liberation Sans" font-size="7.6" fill="#2a2e33" text-anchor="middle">126</text></g></svg>
<div class="a" style="left:0;top:0;width:40px;height:768px;background:#fff;box-shadow:1px 1px 4px rgba(0,0,0,0.10);z-index:5"></div>
<div class="a" style="left:0;top:0;width:40px;height:32px;background:#eff1f4;z-index:6"></div>
<svg class="a" style="left:0;top:0;z-index:7" width="40" height="32"><circle cx="20" cy="16" r="12" fill="#d8dbe0"/><circle cx="16" cy="12" r="1.3" fill="#5b6168"/><circle cx="16" cy="16" r="1.3" fill="#5b6168"/><circle cx="16" cy="20" r="1.3" fill="#5b6168"/><circle cx="20" cy="12" r="1.3" fill="#5b6168"/><circle cx="20" cy="16" r="1.3" fill="#5b6168"/><circle cx="20" cy="20" r="1.3" fill="#5b6168"/><circle cx="24" cy="12" r="1.3" fill="#5b6168"/><circle cx="24" cy="16" r="1.3" fill="#5b6168"/><circle cx="24" cy="20" r="1.3" fill="#5b6168"/></svg>
<svg class="a" style="left:0;top:40px;z-index:7" width="40" height="50" viewBox="0 0 40 50">
<path d="M20.8 12 A12 12 0 0 0 20.8 36 L20.8 30.8 A6.8 6.8 0 0 1 20.8 17.2 Z" fill="#f06b2a"/><rect x="20.55" y="14.83" width="2.3" height="2.3" transform="rotate(-78 21.70 15.98)" fill="#f06b2a"/><rect x="21.04" y="11.99" width="2.5" height="2.5" transform="rotate(-78 22.29 13.24)" fill="#f06b2a"/><rect x="23.90" y="16.39" width="2.3" height="2.3" transform="rotate(-52 25.05 17.54)" fill="#f06b2a"/><rect x="25.52" y="14.08" width="2.5" height="2.5" transform="rotate(-52 26.77 15.33)" fill="#f06b2a"/><rect x="26.22" y="19.26" width="2.3" height="2.3" transform="rotate(-26 27.37 20.41)" fill="#f06b2a"/><rect x="28.64" y="17.93" width="2.5" height="2.5" transform="rotate(-26 29.89 19.18)" fill="#f06b2a"/><rect x="27.05" y="22.85" width="2.3" height="2.3" transform="rotate(0 28.20 24.00)" fill="#f06b2a"/><rect x="29.75" y="22.75" width="2.5" height="2.5" transform="rotate(0 31.00 24.00)" fill="#f06b2a"/><rect x="26.22" y="26.44" width="2.3" height="2.3" transform="rotate(26 27.37 27.59)" fill="#f06b2a"/><rect x="28.64" y="27.57" width="2.5" height="2.5" transform="rotate(26 29.89 28.82)" fill="#f06b2a"/><rect x="23.90" y="29.31" width="2.3" height="2.3" transform="rotate(52 25.05 30.46)" fill="#f06b2a"/><rect x="25.52" y="31.42" width="2.5" height="2.5" transform="rotate(52 26.77 32.67)" fill="#f06b2a"/><rect x="20.55" y="30.87" width="2.3" height="2.3" transform="rotate(78 21.70 32.02)" fill="#f06b2a"/><rect x="21.04" y="33.51" width="2.5" height="2.5" transform="rotate(78 22.29 34.76)" fill="#f06b2a"/></svg>
<svg class="a" style="left:0;top:88px;z-index:7" width="40" height="36"><circle cx="20" cy="17" r="12" fill="#2f6df6"/>
<path d="M17 13.5 L20.5 17 L17 20.5 M19.5 13.5 L23 17 L19.5 20.5" stroke="#fff" stroke-width="0.9" fill="none"/></svg>
</body></html>
